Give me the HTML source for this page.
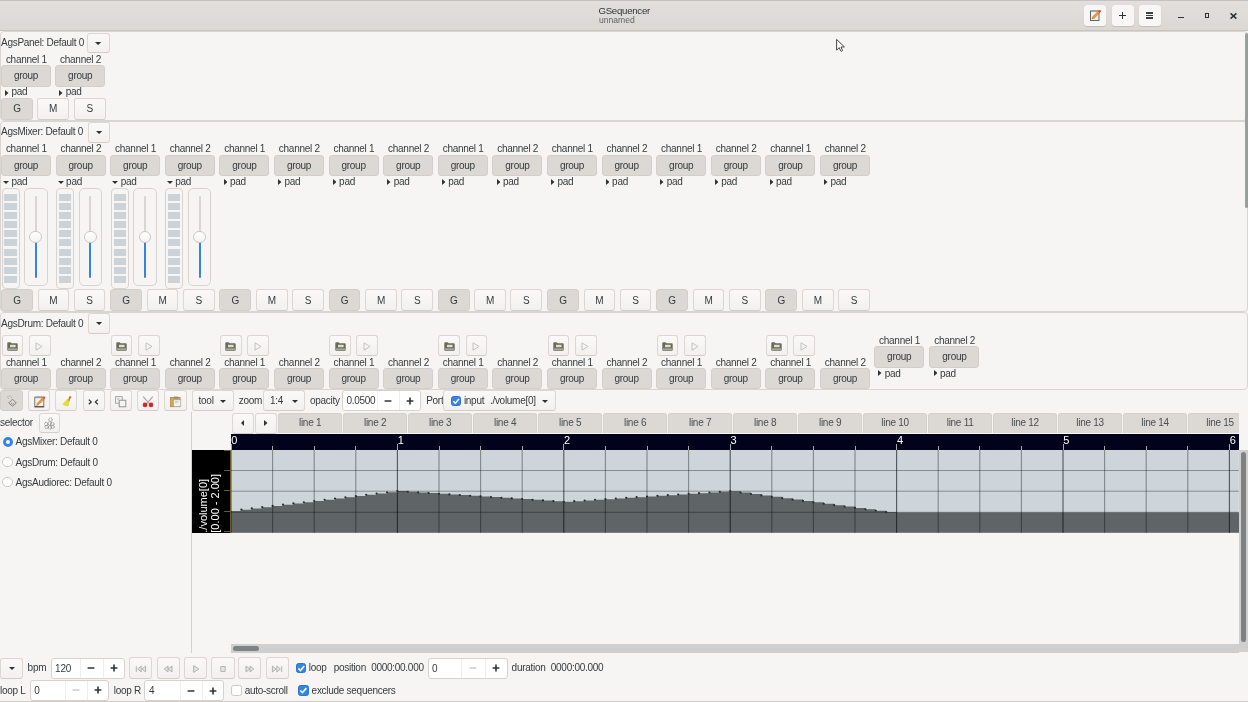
<!DOCTYPE html>
<html><head><meta charset="utf-8"><style>
html,body{margin:0;padding:0;}
body{width:1248px;height:702px;overflow:hidden;position:relative;background:#f6f5f4;font-family:"Liberation Sans",sans-serif;font-size:10px;color:#363b3d;letter-spacing:-0.28px;}
</style></head><body>
<div style="position:absolute;left:0;top:0;width:1248px;height:702px;overflow:hidden;will-change:transform;"><div style="position:absolute;left:0.00px;top:0.00px;width:1248.00px;height:31.00px;background:linear-gradient(#e2dfdc,#dbd8d4);border-top:1px solid #c3c3c2;border-bottom:1px solid #cac4bf;box-sizing:border-box;"></div><div style="position:absolute;left:524.20px;width:200px;text-align:center;top:5.42px;font-size:9.7px;line-height:11.15px;color:#2e3436;white-space:nowrap;">GSequencer</div><div style="position:absolute;left:598.90px;top:15.82px;font-size:8.6px;line-height:9.89px;color:#5e6466;white-space:nowrap;letter-spacing:0;">unnamed</div><div style="position:absolute;left:1084.00px;top:5.10px;width:22.20px;height:20.70px;background:#f8f7f6;border-radius:3px;box-shadow:0 0.5px 1px rgba(0,0,0,0.12);"></div><div style="position:absolute;left:1111.60px;top:5.10px;width:22.00px;height:20.70px;background:#f8f7f6;border-radius:3px;box-shadow:0 0.5px 1px rgba(0,0,0,0.12);"></div><div style="position:absolute;left:1138.80px;top:5.10px;width:22.20px;height:20.70px;background:#f8f7f6;border-radius:3px;box-shadow:0 0.5px 1px rgba(0,0,0,0.12);"></div><div style="position:absolute;left:1119.00px;top:14.75px;width:7.40px;height:1.50px;background:#2e3436;"></div><div style="position:absolute;left:1121.95px;top:11.90px;width:1.50px;height:7.20px;background:#2e3436;"></div><div style="position:absolute;left:1146.30px;top:12.00px;width:7.10px;height:1.50px;background:#3b4042;"></div><div style="position:absolute;left:1146.30px;top:14.70px;width:7.10px;height:1.50px;background:#3b4042;"></div><div style="position:absolute;left:1146.30px;top:17.40px;width:7.10px;height:1.50px;background:#3b4042;"></div><div style="position:absolute;left:1178.00px;top:16.60px;width:6.00px;height:1.40px;background:#2e3436;"></div><div style="position:absolute;left:1205.00px;top:13.40px;width:4.40px;height:4.50px;border:1.3px solid #2e3436;box-sizing:border-box;"></div><svg style="position:absolute;left:1229.5px;top:12.5px" width="7" height="6" viewBox="0 0 7 6"><path d="M0.6 0.4 L6.4 5.6 M6.4 0.4 L0.6 5.6" stroke="#2e3436" stroke-width="1.6"/></svg><svg style="position:absolute;left:1089px;top:9px" width="13" height="13" viewBox="0 0 13 13"><rect x="1.5" y="2" width="8.5" height="9.5" fill="#f2f2f0" stroke="#555753" stroke-width="0.9"/><rect x="2.5" y="1" width="6" height="1.6" fill="#a0a09c"/><path d="M3 10 L3.8 7.6 L9.6 2 L11 3.4 L5.2 9.2 Z" fill="#f0a030" stroke="#b06010" stroke-width="0.5"/><circle cx="10.6" cy="2.2" r="1.3" fill="#ef4040"/></svg><div style="position:absolute;left:0.00px;top:31.00px;width:1248.00px;height:90.00px;border:1px solid #d9d5d1;border-radius:4px;box-sizing:border-box;"></div><div style="position:absolute;left:0.00px;top:121.00px;width:1248.00px;height:191.00px;border:1px solid #d9d5d1;border-radius:4px;box-sizing:border-box;"></div><div style="position:absolute;left:0.00px;top:312.00px;width:1248.00px;height:78.00px;border:1px solid #d9d5d1;border-radius:4px;box-sizing:border-box;"></div><div style="position:absolute;left:1.00px;top:36.55px;font-size:10px;line-height:11.50px;color:#363b3d;white-space:nowrap;">AgsPanel: Default 0</div><div style="position:absolute;left:87.00px;top:33.00px;width:23.00px;height:20.20px;background:linear-gradient(#faf9f8,#f3f1ef);border:1px solid #dcd7d2;border-bottom-color:#d3cdc8;border-radius:3px;box-sizing:border-box;"></div><svg style="position:absolute;left:95.40px;top:41.75px" width="6.20" height="3.10" viewBox="0 0 6.20 3.10"><path d="M0 0 L6.20 0 L3.10 3.10 Z" fill="#2e3436"/></svg><div style="position:absolute;left:-73.70px;width:200px;text-align:center;top:53.75px;font-size:10px;line-height:11.50px;color:#363b3d;white-space:nowrap;">channel 1</div><div style="position:absolute;left:1.00px;top:65.00px;width:50.00px;height:21.60px;background:#dcd8d4;border:1px solid #d3cec9;border-radius:3px;box-sizing:border-box;"></div><div style="position:absolute;left:-74.00px;width:200px;text-align:center;top:70.35px;font-size:10px;line-height:11.50px;color:#363b3d;white-space:nowrap;">group</div><svg style="position:absolute;left:5.16px;top:90.10px" width="3.48" height="6.00" viewBox="0 0 3.48 6.00"><path d="M0 0 L3.48 3.00 L0 6.00 Z" fill="#2e3436"/></svg><div style="position:absolute;left:11.50px;top:85.55px;font-size:10px;line-height:11.50px;color:#363b3d;white-space:nowrap;">pad</div><div style="position:absolute;left:-19.50px;width:200px;text-align:center;top:53.75px;font-size:10px;line-height:11.50px;color:#363b3d;white-space:nowrap;">channel 2</div><div style="position:absolute;left:55.20px;top:65.00px;width:50.00px;height:21.60px;background:#dcd8d4;border:1px solid #d3cec9;border-radius:3px;box-sizing:border-box;"></div><div style="position:absolute;left:-19.80px;width:200px;text-align:center;top:70.35px;font-size:10px;line-height:11.50px;color:#363b3d;white-space:nowrap;">group</div><svg style="position:absolute;left:59.36px;top:90.10px" width="3.48" height="6.00" viewBox="0 0 3.48 6.00"><path d="M0 0 L3.48 3.00 L0 6.00 Z" fill="#2e3436"/></svg><div style="position:absolute;left:65.70px;top:85.55px;font-size:10px;line-height:11.50px;color:#363b3d;white-space:nowrap;">pad</div><div style="position:absolute;left:1.00px;top:98.00px;width:32.00px;height:21.60px;background:#dcd8d4;border:1px solid #d3cec9;border-radius:3px;box-sizing:border-box;"></div><div style="position:absolute;left:-83.00px;width:200px;text-align:center;top:103.35px;font-size:10px;line-height:11.50px;color:#363b3d;white-space:nowrap;">G</div><div style="position:absolute;left:37.00px;top:98.00px;width:32.00px;height:21.60px;background:linear-gradient(#faf9f8,#f3f1ef);border:1px solid #dcd7d2;border-bottom-color:#d3cdc8;border-radius:3px;box-sizing:border-box;"></div><div style="position:absolute;left:-47.00px;width:200px;text-align:center;top:103.35px;font-size:10px;line-height:11.50px;color:#363b3d;white-space:nowrap;">M</div><div style="position:absolute;left:74.00px;top:98.00px;width:31.60px;height:21.60px;background:linear-gradient(#faf9f8,#f3f1ef);border:1px solid #dcd7d2;border-bottom-color:#d3cdc8;border-radius:3px;box-sizing:border-box;"></div><div style="position:absolute;left:-10.20px;width:200px;text-align:center;top:103.35px;font-size:10px;line-height:11.50px;color:#363b3d;white-space:nowrap;">S</div><div style="position:absolute;left:1.00px;top:126.15px;font-size:10px;line-height:11.50px;color:#363b3d;white-space:nowrap;">AgsMixer: Default 0</div><div style="position:absolute;left:88.40px;top:122.40px;width:22.00px;height:20.60px;background:linear-gradient(#faf9f8,#f3f1ef);border:1px solid #dcd7d2;border-bottom-color:#d3cdc8;border-radius:3px;box-sizing:border-box;"></div><svg style="position:absolute;left:96.30px;top:131.35px" width="6.20" height="3.10" viewBox="0 0 6.20 3.10"><path d="M0 0 L6.20 0 L3.10 3.10 Z" fill="#2e3436"/></svg><div style="position:absolute;left:-73.70px;width:200px;text-align:center;top:143.45px;font-size:10px;line-height:11.50px;color:#363b3d;white-space:nowrap;">channel 1</div><div style="position:absolute;left:1.00px;top:155.00px;width:50.00px;height:21.40px;background:#dcd8d4;border:1px solid #d3cec9;border-radius:3px;box-sizing:border-box;"></div><div style="position:absolute;left:-74.00px;width:200px;text-align:center;top:160.25px;font-size:10px;line-height:11.50px;color:#363b3d;white-space:nowrap;">group</div><svg style="position:absolute;left:2.90px;top:181.00px" width="6.00" height="3.00" viewBox="0 0 6.00 3.00"><path d="M0 0 L6.00 0 L3.00 3.00 Z" fill="#2e3436"/></svg><div style="position:absolute;left:11.50px;top:176.05px;font-size:10px;line-height:11.50px;color:#363b3d;white-space:nowrap;">pad</div><div style="position:absolute;left:1.50px;top:188.00px;width:18.00px;height:100.60px;border:1px solid #d8d3ce;border-radius:4px;box-sizing:border-box;background:#f6f5f4;"></div><div style="position:absolute;left:4.30px;top:193.90px;width:12.40px;height:7.00px;background:#cbd2d8;"></div><div style="position:absolute;left:4.30px;top:203.00px;width:12.40px;height:7.00px;background:#cbd2d8;"></div><div style="position:absolute;left:4.30px;top:212.10px;width:12.40px;height:7.00px;background:#cbd2d8;"></div><div style="position:absolute;left:4.30px;top:221.20px;width:12.40px;height:7.00px;background:#cbd2d8;"></div><div style="position:absolute;left:4.30px;top:230.30px;width:12.40px;height:7.00px;background:#cbd2d8;"></div><div style="position:absolute;left:4.30px;top:239.40px;width:12.40px;height:7.00px;background:#cbd2d8;"></div><div style="position:absolute;left:4.30px;top:248.50px;width:12.40px;height:7.00px;background:#cbd2d8;"></div><div style="position:absolute;left:4.30px;top:257.60px;width:12.40px;height:7.00px;background:#cbd2d8;"></div><div style="position:absolute;left:4.30px;top:266.70px;width:12.40px;height:7.00px;background:#cbd2d8;"></div><div style="position:absolute;left:4.30px;top:275.80px;width:12.40px;height:7.00px;background:#cbd2d8;"></div><div style="position:absolute;left:24.00px;top:188.00px;width:23.50px;height:98.30px;border:1px solid #d8d3ce;border-radius:5px;box-sizing:border-box;background:#f6f5f4;"></div><div style="position:absolute;left:34.70px;top:196.30px;width:2.00px;height:40.70px;background:#d9d5d1;border-radius:1px;"></div><div style="position:absolute;left:34.70px;top:237.00px;width:2.00px;height:41.20px;background:#3584e4;border-radius:1px;"></div><div style="position:absolute;left:29.30px;top:230.60px;width:12.80px;height:12.80px;background:linear-gradient(#ffffff,#f4f3f1);border:1px solid #cdc7c2;border-radius:50%;box-sizing:border-box;"></div><div style="position:absolute;left:-19.10px;width:200px;text-align:center;top:143.45px;font-size:10px;line-height:11.50px;color:#363b3d;white-space:nowrap;">channel 2</div><div style="position:absolute;left:55.60px;top:155.00px;width:50.00px;height:21.40px;background:#dcd8d4;border:1px solid #d3cec9;border-radius:3px;box-sizing:border-box;"></div><div style="position:absolute;left:-19.40px;width:200px;text-align:center;top:160.25px;font-size:10px;line-height:11.50px;color:#363b3d;white-space:nowrap;">group</div><svg style="position:absolute;left:57.50px;top:181.00px" width="6.00" height="3.00" viewBox="0 0 6.00 3.00"><path d="M0 0 L6.00 0 L3.00 3.00 Z" fill="#2e3436"/></svg><div style="position:absolute;left:66.10px;top:176.05px;font-size:10px;line-height:11.50px;color:#363b3d;white-space:nowrap;">pad</div><div style="position:absolute;left:56.10px;top:188.00px;width:18.00px;height:100.60px;border:1px solid #d8d3ce;border-radius:4px;box-sizing:border-box;background:#f6f5f4;"></div><div style="position:absolute;left:58.90px;top:193.90px;width:12.40px;height:7.00px;background:#cbd2d8;"></div><div style="position:absolute;left:58.90px;top:203.00px;width:12.40px;height:7.00px;background:#cbd2d8;"></div><div style="position:absolute;left:58.90px;top:212.10px;width:12.40px;height:7.00px;background:#cbd2d8;"></div><div style="position:absolute;left:58.90px;top:221.20px;width:12.40px;height:7.00px;background:#cbd2d8;"></div><div style="position:absolute;left:58.90px;top:230.30px;width:12.40px;height:7.00px;background:#cbd2d8;"></div><div style="position:absolute;left:58.90px;top:239.40px;width:12.40px;height:7.00px;background:#cbd2d8;"></div><div style="position:absolute;left:58.90px;top:248.50px;width:12.40px;height:7.00px;background:#cbd2d8;"></div><div style="position:absolute;left:58.90px;top:257.60px;width:12.40px;height:7.00px;background:#cbd2d8;"></div><div style="position:absolute;left:58.90px;top:266.70px;width:12.40px;height:7.00px;background:#cbd2d8;"></div><div style="position:absolute;left:58.90px;top:275.80px;width:12.40px;height:7.00px;background:#cbd2d8;"></div><div style="position:absolute;left:78.60px;top:188.00px;width:23.50px;height:98.30px;border:1px solid #d8d3ce;border-radius:5px;box-sizing:border-box;background:#f6f5f4;"></div><div style="position:absolute;left:89.30px;top:196.30px;width:2.00px;height:40.70px;background:#d9d5d1;border-radius:1px;"></div><div style="position:absolute;left:89.30px;top:237.00px;width:2.00px;height:41.20px;background:#3584e4;border-radius:1px;"></div><div style="position:absolute;left:83.90px;top:230.60px;width:12.80px;height:12.80px;background:linear-gradient(#ffffff,#f4f3f1);border:1px solid #cdc7c2;border-radius:50%;box-sizing:border-box;"></div><div style="position:absolute;left:35.50px;width:200px;text-align:center;top:143.45px;font-size:10px;line-height:11.50px;color:#363b3d;white-space:nowrap;">channel 1</div><div style="position:absolute;left:110.20px;top:155.00px;width:50.00px;height:21.40px;background:#dcd8d4;border:1px solid #d3cec9;border-radius:3px;box-sizing:border-box;"></div><div style="position:absolute;left:35.20px;width:200px;text-align:center;top:160.25px;font-size:10px;line-height:11.50px;color:#363b3d;white-space:nowrap;">group</div><svg style="position:absolute;left:112.10px;top:181.00px" width="6.00" height="3.00" viewBox="0 0 6.00 3.00"><path d="M0 0 L6.00 0 L3.00 3.00 Z" fill="#2e3436"/></svg><div style="position:absolute;left:120.70px;top:176.05px;font-size:10px;line-height:11.50px;color:#363b3d;white-space:nowrap;">pad</div><div style="position:absolute;left:110.70px;top:188.00px;width:18.00px;height:100.60px;border:1px solid #d8d3ce;border-radius:4px;box-sizing:border-box;background:#f6f5f4;"></div><div style="position:absolute;left:113.50px;top:193.90px;width:12.40px;height:7.00px;background:#cbd2d8;"></div><div style="position:absolute;left:113.50px;top:203.00px;width:12.40px;height:7.00px;background:#cbd2d8;"></div><div style="position:absolute;left:113.50px;top:212.10px;width:12.40px;height:7.00px;background:#cbd2d8;"></div><div style="position:absolute;left:113.50px;top:221.20px;width:12.40px;height:7.00px;background:#cbd2d8;"></div><div style="position:absolute;left:113.50px;top:230.30px;width:12.40px;height:7.00px;background:#cbd2d8;"></div><div style="position:absolute;left:113.50px;top:239.40px;width:12.40px;height:7.00px;background:#cbd2d8;"></div><div style="position:absolute;left:113.50px;top:248.50px;width:12.40px;height:7.00px;background:#cbd2d8;"></div><div style="position:absolute;left:113.50px;top:257.60px;width:12.40px;height:7.00px;background:#cbd2d8;"></div><div style="position:absolute;left:113.50px;top:266.70px;width:12.40px;height:7.00px;background:#cbd2d8;"></div><div style="position:absolute;left:113.50px;top:275.80px;width:12.40px;height:7.00px;background:#cbd2d8;"></div><div style="position:absolute;left:133.20px;top:188.00px;width:23.50px;height:98.30px;border:1px solid #d8d3ce;border-radius:5px;box-sizing:border-box;background:#f6f5f4;"></div><div style="position:absolute;left:143.90px;top:196.30px;width:2.00px;height:40.70px;background:#d9d5d1;border-radius:1px;"></div><div style="position:absolute;left:143.90px;top:237.00px;width:2.00px;height:41.20px;background:#3584e4;border-radius:1px;"></div><div style="position:absolute;left:138.50px;top:230.60px;width:12.80px;height:12.80px;background:linear-gradient(#ffffff,#f4f3f1);border:1px solid #cdc7c2;border-radius:50%;box-sizing:border-box;"></div><div style="position:absolute;left:90.10px;width:200px;text-align:center;top:143.45px;font-size:10px;line-height:11.50px;color:#363b3d;white-space:nowrap;">channel 2</div><div style="position:absolute;left:164.80px;top:155.00px;width:50.00px;height:21.40px;background:#dcd8d4;border:1px solid #d3cec9;border-radius:3px;box-sizing:border-box;"></div><div style="position:absolute;left:89.80px;width:200px;text-align:center;top:160.25px;font-size:10px;line-height:11.50px;color:#363b3d;white-space:nowrap;">group</div><svg style="position:absolute;left:166.70px;top:181.00px" width="6.00" height="3.00" viewBox="0 0 6.00 3.00"><path d="M0 0 L6.00 0 L3.00 3.00 Z" fill="#2e3436"/></svg><div style="position:absolute;left:175.30px;top:176.05px;font-size:10px;line-height:11.50px;color:#363b3d;white-space:nowrap;">pad</div><div style="position:absolute;left:165.30px;top:188.00px;width:18.00px;height:100.60px;border:1px solid #d8d3ce;border-radius:4px;box-sizing:border-box;background:#f6f5f4;"></div><div style="position:absolute;left:168.10px;top:193.90px;width:12.40px;height:7.00px;background:#cbd2d8;"></div><div style="position:absolute;left:168.10px;top:203.00px;width:12.40px;height:7.00px;background:#cbd2d8;"></div><div style="position:absolute;left:168.10px;top:212.10px;width:12.40px;height:7.00px;background:#cbd2d8;"></div><div style="position:absolute;left:168.10px;top:221.20px;width:12.40px;height:7.00px;background:#cbd2d8;"></div><div style="position:absolute;left:168.10px;top:230.30px;width:12.40px;height:7.00px;background:#cbd2d8;"></div><div style="position:absolute;left:168.10px;top:239.40px;width:12.40px;height:7.00px;background:#cbd2d8;"></div><div style="position:absolute;left:168.10px;top:248.50px;width:12.40px;height:7.00px;background:#cbd2d8;"></div><div style="position:absolute;left:168.10px;top:257.60px;width:12.40px;height:7.00px;background:#cbd2d8;"></div><div style="position:absolute;left:168.10px;top:266.70px;width:12.40px;height:7.00px;background:#cbd2d8;"></div><div style="position:absolute;left:168.10px;top:275.80px;width:12.40px;height:7.00px;background:#cbd2d8;"></div><div style="position:absolute;left:187.80px;top:188.00px;width:23.50px;height:98.30px;border:1px solid #d8d3ce;border-radius:5px;box-sizing:border-box;background:#f6f5f4;"></div><div style="position:absolute;left:198.50px;top:196.30px;width:2.00px;height:40.70px;background:#d9d5d1;border-radius:1px;"></div><div style="position:absolute;left:198.50px;top:237.00px;width:2.00px;height:41.20px;background:#3584e4;border-radius:1px;"></div><div style="position:absolute;left:193.10px;top:230.60px;width:12.80px;height:12.80px;background:linear-gradient(#ffffff,#f4f3f1);border:1px solid #cdc7c2;border-radius:50%;box-sizing:border-box;"></div><div style="position:absolute;left:144.70px;width:200px;text-align:center;top:143.45px;font-size:10px;line-height:11.50px;color:#363b3d;white-space:nowrap;">channel 1</div><div style="position:absolute;left:219.40px;top:155.00px;width:50.00px;height:21.40px;background:#dcd8d4;border:1px solid #d3cec9;border-radius:3px;box-sizing:border-box;"></div><div style="position:absolute;left:144.40px;width:200px;text-align:center;top:160.25px;font-size:10px;line-height:11.50px;color:#363b3d;white-space:nowrap;">group</div><svg style="position:absolute;left:223.56px;top:179.40px" width="3.48" height="6.00" viewBox="0 0 3.48 6.00"><path d="M0 0 L3.48 3.00 L0 6.00 Z" fill="#2e3436"/></svg><div style="position:absolute;left:229.90px;top:176.05px;font-size:10px;line-height:11.50px;color:#363b3d;white-space:nowrap;">pad</div><div style="position:absolute;left:199.30px;width:200px;text-align:center;top:143.45px;font-size:10px;line-height:11.50px;color:#363b3d;white-space:nowrap;">channel 2</div><div style="position:absolute;left:274.00px;top:155.00px;width:50.00px;height:21.40px;background:#dcd8d4;border:1px solid #d3cec9;border-radius:3px;box-sizing:border-box;"></div><div style="position:absolute;left:199.00px;width:200px;text-align:center;top:160.25px;font-size:10px;line-height:11.50px;color:#363b3d;white-space:nowrap;">group</div><svg style="position:absolute;left:278.16px;top:179.40px" width="3.48" height="6.00" viewBox="0 0 3.48 6.00"><path d="M0 0 L3.48 3.00 L0 6.00 Z" fill="#2e3436"/></svg><div style="position:absolute;left:284.50px;top:176.05px;font-size:10px;line-height:11.50px;color:#363b3d;white-space:nowrap;">pad</div><div style="position:absolute;left:253.90px;width:200px;text-align:center;top:143.45px;font-size:10px;line-height:11.50px;color:#363b3d;white-space:nowrap;">channel 1</div><div style="position:absolute;left:328.60px;top:155.00px;width:50.00px;height:21.40px;background:#dcd8d4;border:1px solid #d3cec9;border-radius:3px;box-sizing:border-box;"></div><div style="position:absolute;left:253.60px;width:200px;text-align:center;top:160.25px;font-size:10px;line-height:11.50px;color:#363b3d;white-space:nowrap;">group</div><svg style="position:absolute;left:332.76px;top:179.40px" width="3.48" height="6.00" viewBox="0 0 3.48 6.00"><path d="M0 0 L3.48 3.00 L0 6.00 Z" fill="#2e3436"/></svg><div style="position:absolute;left:339.10px;top:176.05px;font-size:10px;line-height:11.50px;color:#363b3d;white-space:nowrap;">pad</div><div style="position:absolute;left:308.50px;width:200px;text-align:center;top:143.45px;font-size:10px;line-height:11.50px;color:#363b3d;white-space:nowrap;">channel 2</div><div style="position:absolute;left:383.20px;top:155.00px;width:50.00px;height:21.40px;background:#dcd8d4;border:1px solid #d3cec9;border-radius:3px;box-sizing:border-box;"></div><div style="position:absolute;left:308.20px;width:200px;text-align:center;top:160.25px;font-size:10px;line-height:11.50px;color:#363b3d;white-space:nowrap;">group</div><svg style="position:absolute;left:387.36px;top:179.40px" width="3.48" height="6.00" viewBox="0 0 3.48 6.00"><path d="M0 0 L3.48 3.00 L0 6.00 Z" fill="#2e3436"/></svg><div style="position:absolute;left:393.70px;top:176.05px;font-size:10px;line-height:11.50px;color:#363b3d;white-space:nowrap;">pad</div><div style="position:absolute;left:363.10px;width:200px;text-align:center;top:143.45px;font-size:10px;line-height:11.50px;color:#363b3d;white-space:nowrap;">channel 1</div><div style="position:absolute;left:437.80px;top:155.00px;width:50.00px;height:21.40px;background:#dcd8d4;border:1px solid #d3cec9;border-radius:3px;box-sizing:border-box;"></div><div style="position:absolute;left:362.80px;width:200px;text-align:center;top:160.25px;font-size:10px;line-height:11.50px;color:#363b3d;white-space:nowrap;">group</div><svg style="position:absolute;left:441.96px;top:179.40px" width="3.48" height="6.00" viewBox="0 0 3.48 6.00"><path d="M0 0 L3.48 3.00 L0 6.00 Z" fill="#2e3436"/></svg><div style="position:absolute;left:448.30px;top:176.05px;font-size:10px;line-height:11.50px;color:#363b3d;white-space:nowrap;">pad</div><div style="position:absolute;left:417.70px;width:200px;text-align:center;top:143.45px;font-size:10px;line-height:11.50px;color:#363b3d;white-space:nowrap;">channel 2</div><div style="position:absolute;left:492.40px;top:155.00px;width:50.00px;height:21.40px;background:#dcd8d4;border:1px solid #d3cec9;border-radius:3px;box-sizing:border-box;"></div><div style="position:absolute;left:417.40px;width:200px;text-align:center;top:160.25px;font-size:10px;line-height:11.50px;color:#363b3d;white-space:nowrap;">group</div><svg style="position:absolute;left:496.56px;top:179.40px" width="3.48" height="6.00" viewBox="0 0 3.48 6.00"><path d="M0 0 L3.48 3.00 L0 6.00 Z" fill="#2e3436"/></svg><div style="position:absolute;left:502.90px;top:176.05px;font-size:10px;line-height:11.50px;color:#363b3d;white-space:nowrap;">pad</div><div style="position:absolute;left:472.30px;width:200px;text-align:center;top:143.45px;font-size:10px;line-height:11.50px;color:#363b3d;white-space:nowrap;">channel 1</div><div style="position:absolute;left:547.00px;top:155.00px;width:50.00px;height:21.40px;background:#dcd8d4;border:1px solid #d3cec9;border-radius:3px;box-sizing:border-box;"></div><div style="position:absolute;left:472.00px;width:200px;text-align:center;top:160.25px;font-size:10px;line-height:11.50px;color:#363b3d;white-space:nowrap;">group</div><svg style="position:absolute;left:551.16px;top:179.40px" width="3.48" height="6.00" viewBox="0 0 3.48 6.00"><path d="M0 0 L3.48 3.00 L0 6.00 Z" fill="#2e3436"/></svg><div style="position:absolute;left:557.50px;top:176.05px;font-size:10px;line-height:11.50px;color:#363b3d;white-space:nowrap;">pad</div><div style="position:absolute;left:526.90px;width:200px;text-align:center;top:143.45px;font-size:10px;line-height:11.50px;color:#363b3d;white-space:nowrap;">channel 2</div><div style="position:absolute;left:601.60px;top:155.00px;width:50.00px;height:21.40px;background:#dcd8d4;border:1px solid #d3cec9;border-radius:3px;box-sizing:border-box;"></div><div style="position:absolute;left:526.60px;width:200px;text-align:center;top:160.25px;font-size:10px;line-height:11.50px;color:#363b3d;white-space:nowrap;">group</div><svg style="position:absolute;left:605.76px;top:179.40px" width="3.48" height="6.00" viewBox="0 0 3.48 6.00"><path d="M0 0 L3.48 3.00 L0 6.00 Z" fill="#2e3436"/></svg><div style="position:absolute;left:612.10px;top:176.05px;font-size:10px;line-height:11.50px;color:#363b3d;white-space:nowrap;">pad</div><div style="position:absolute;left:581.50px;width:200px;text-align:center;top:143.45px;font-size:10px;line-height:11.50px;color:#363b3d;white-space:nowrap;">channel 1</div><div style="position:absolute;left:656.20px;top:155.00px;width:50.00px;height:21.40px;background:#dcd8d4;border:1px solid #d3cec9;border-radius:3px;box-sizing:border-box;"></div><div style="position:absolute;left:581.20px;width:200px;text-align:center;top:160.25px;font-size:10px;line-height:11.50px;color:#363b3d;white-space:nowrap;">group</div><svg style="position:absolute;left:660.36px;top:179.40px" width="3.48" height="6.00" viewBox="0 0 3.48 6.00"><path d="M0 0 L3.48 3.00 L0 6.00 Z" fill="#2e3436"/></svg><div style="position:absolute;left:666.70px;top:176.05px;font-size:10px;line-height:11.50px;color:#363b3d;white-space:nowrap;">pad</div><div style="position:absolute;left:636.10px;width:200px;text-align:center;top:143.45px;font-size:10px;line-height:11.50px;color:#363b3d;white-space:nowrap;">channel 2</div><div style="position:absolute;left:710.80px;top:155.00px;width:50.00px;height:21.40px;background:#dcd8d4;border:1px solid #d3cec9;border-radius:3px;box-sizing:border-box;"></div><div style="position:absolute;left:635.80px;width:200px;text-align:center;top:160.25px;font-size:10px;line-height:11.50px;color:#363b3d;white-space:nowrap;">group</div><svg style="position:absolute;left:714.96px;top:179.40px" width="3.48" height="6.00" viewBox="0 0 3.48 6.00"><path d="M0 0 L3.48 3.00 L0 6.00 Z" fill="#2e3436"/></svg><div style="position:absolute;left:721.30px;top:176.05px;font-size:10px;line-height:11.50px;color:#363b3d;white-space:nowrap;">pad</div><div style="position:absolute;left:690.70px;width:200px;text-align:center;top:143.45px;font-size:10px;line-height:11.50px;color:#363b3d;white-space:nowrap;">channel 1</div><div style="position:absolute;left:765.40px;top:155.00px;width:50.00px;height:21.40px;background:#dcd8d4;border:1px solid #d3cec9;border-radius:3px;box-sizing:border-box;"></div><div style="position:absolute;left:690.40px;width:200px;text-align:center;top:160.25px;font-size:10px;line-height:11.50px;color:#363b3d;white-space:nowrap;">group</div><svg style="position:absolute;left:769.56px;top:179.40px" width="3.48" height="6.00" viewBox="0 0 3.48 6.00"><path d="M0 0 L3.48 3.00 L0 6.00 Z" fill="#2e3436"/></svg><div style="position:absolute;left:775.90px;top:176.05px;font-size:10px;line-height:11.50px;color:#363b3d;white-space:nowrap;">pad</div><div style="position:absolute;left:745.30px;width:200px;text-align:center;top:143.45px;font-size:10px;line-height:11.50px;color:#363b3d;white-space:nowrap;">channel 2</div><div style="position:absolute;left:820.00px;top:155.00px;width:50.00px;height:21.40px;background:#dcd8d4;border:1px solid #d3cec9;border-radius:3px;box-sizing:border-box;"></div><div style="position:absolute;left:745.00px;width:200px;text-align:center;top:160.25px;font-size:10px;line-height:11.50px;color:#363b3d;white-space:nowrap;">group</div><svg style="position:absolute;left:824.16px;top:179.40px" width="3.48" height="6.00" viewBox="0 0 3.48 6.00"><path d="M0 0 L3.48 3.00 L0 6.00 Z" fill="#2e3436"/></svg><div style="position:absolute;left:830.50px;top:176.05px;font-size:10px;line-height:11.50px;color:#363b3d;white-space:nowrap;">pad</div><div style="position:absolute;left:1.00px;top:289.40px;width:31.80px;height:21.60px;background:#dcd8d4;border:1px solid #d3cec9;border-radius:3px;box-sizing:border-box;"></div><div style="position:absolute;left:-83.10px;width:200px;text-align:center;top:294.75px;font-size:10px;line-height:11.50px;color:#363b3d;white-space:nowrap;">G</div><div style="position:absolute;left:37.50px;top:289.40px;width:31.70px;height:21.60px;background:linear-gradient(#faf9f8,#f3f1ef);border:1px solid #dcd7d2;border-bottom-color:#d3cdc8;border-radius:3px;box-sizing:border-box;"></div><div style="position:absolute;left:-46.65px;width:200px;text-align:center;top:294.75px;font-size:10px;line-height:11.50px;color:#363b3d;white-space:nowrap;">M</div><div style="position:absolute;left:73.60px;top:289.40px;width:31.80px;height:21.60px;background:linear-gradient(#faf9f8,#f3f1ef);border:1px solid #dcd7d2;border-bottom-color:#d3cdc8;border-radius:3px;box-sizing:border-box;"></div><div style="position:absolute;left:-10.50px;width:200px;text-align:center;top:294.75px;font-size:10px;line-height:11.50px;color:#363b3d;white-space:nowrap;">S</div><div style="position:absolute;left:110.20px;top:289.40px;width:31.80px;height:21.60px;background:#dcd8d4;border:1px solid #d3cec9;border-radius:3px;box-sizing:border-box;"></div><div style="position:absolute;left:26.10px;width:200px;text-align:center;top:294.75px;font-size:10px;line-height:11.50px;color:#363b3d;white-space:nowrap;">G</div><div style="position:absolute;left:146.70px;top:289.40px;width:31.70px;height:21.60px;background:linear-gradient(#faf9f8,#f3f1ef);border:1px solid #dcd7d2;border-bottom-color:#d3cdc8;border-radius:3px;box-sizing:border-box;"></div><div style="position:absolute;left:62.55px;width:200px;text-align:center;top:294.75px;font-size:10px;line-height:11.50px;color:#363b3d;white-space:nowrap;">M</div><div style="position:absolute;left:182.80px;top:289.40px;width:31.80px;height:21.60px;background:linear-gradient(#faf9f8,#f3f1ef);border:1px solid #dcd7d2;border-bottom-color:#d3cdc8;border-radius:3px;box-sizing:border-box;"></div><div style="position:absolute;left:98.70px;width:200px;text-align:center;top:294.75px;font-size:10px;line-height:11.50px;color:#363b3d;white-space:nowrap;">S</div><div style="position:absolute;left:219.40px;top:289.40px;width:31.80px;height:21.60px;background:#dcd8d4;border:1px solid #d3cec9;border-radius:3px;box-sizing:border-box;"></div><div style="position:absolute;left:135.30px;width:200px;text-align:center;top:294.75px;font-size:10px;line-height:11.50px;color:#363b3d;white-space:nowrap;">G</div><div style="position:absolute;left:255.90px;top:289.40px;width:31.70px;height:21.60px;background:linear-gradient(#faf9f8,#f3f1ef);border:1px solid #dcd7d2;border-bottom-color:#d3cdc8;border-radius:3px;box-sizing:border-box;"></div><div style="position:absolute;left:171.75px;width:200px;text-align:center;top:294.75px;font-size:10px;line-height:11.50px;color:#363b3d;white-space:nowrap;">M</div><div style="position:absolute;left:292.00px;top:289.40px;width:31.80px;height:21.60px;background:linear-gradient(#faf9f8,#f3f1ef);border:1px solid #dcd7d2;border-bottom-color:#d3cdc8;border-radius:3px;box-sizing:border-box;"></div><div style="position:absolute;left:207.90px;width:200px;text-align:center;top:294.75px;font-size:10px;line-height:11.50px;color:#363b3d;white-space:nowrap;">S</div><div style="position:absolute;left:328.60px;top:289.40px;width:31.80px;height:21.60px;background:#dcd8d4;border:1px solid #d3cec9;border-radius:3px;box-sizing:border-box;"></div><div style="position:absolute;left:244.50px;width:200px;text-align:center;top:294.75px;font-size:10px;line-height:11.50px;color:#363b3d;white-space:nowrap;">G</div><div style="position:absolute;left:365.10px;top:289.40px;width:31.70px;height:21.60px;background:linear-gradient(#faf9f8,#f3f1ef);border:1px solid #dcd7d2;border-bottom-color:#d3cdc8;border-radius:3px;box-sizing:border-box;"></div><div style="position:absolute;left:280.95px;width:200px;text-align:center;top:294.75px;font-size:10px;line-height:11.50px;color:#363b3d;white-space:nowrap;">M</div><div style="position:absolute;left:401.20px;top:289.40px;width:31.80px;height:21.60px;background:linear-gradient(#faf9f8,#f3f1ef);border:1px solid #dcd7d2;border-bottom-color:#d3cdc8;border-radius:3px;box-sizing:border-box;"></div><div style="position:absolute;left:317.10px;width:200px;text-align:center;top:294.75px;font-size:10px;line-height:11.50px;color:#363b3d;white-space:nowrap;">S</div><div style="position:absolute;left:437.80px;top:289.40px;width:31.80px;height:21.60px;background:#dcd8d4;border:1px solid #d3cec9;border-radius:3px;box-sizing:border-box;"></div><div style="position:absolute;left:353.70px;width:200px;text-align:center;top:294.75px;font-size:10px;line-height:11.50px;color:#363b3d;white-space:nowrap;">G</div><div style="position:absolute;left:474.30px;top:289.40px;width:31.70px;height:21.60px;background:linear-gradient(#faf9f8,#f3f1ef);border:1px solid #dcd7d2;border-bottom-color:#d3cdc8;border-radius:3px;box-sizing:border-box;"></div><div style="position:absolute;left:390.15px;width:200px;text-align:center;top:294.75px;font-size:10px;line-height:11.50px;color:#363b3d;white-space:nowrap;">M</div><div style="position:absolute;left:510.40px;top:289.40px;width:31.80px;height:21.60px;background:linear-gradient(#faf9f8,#f3f1ef);border:1px solid #dcd7d2;border-bottom-color:#d3cdc8;border-radius:3px;box-sizing:border-box;"></div><div style="position:absolute;left:426.30px;width:200px;text-align:center;top:294.75px;font-size:10px;line-height:11.50px;color:#363b3d;white-space:nowrap;">S</div><div style="position:absolute;left:547.00px;top:289.40px;width:31.80px;height:21.60px;background:#dcd8d4;border:1px solid #d3cec9;border-radius:3px;box-sizing:border-box;"></div><div style="position:absolute;left:462.90px;width:200px;text-align:center;top:294.75px;font-size:10px;line-height:11.50px;color:#363b3d;white-space:nowrap;">G</div><div style="position:absolute;left:583.50px;top:289.40px;width:31.70px;height:21.60px;background:linear-gradient(#faf9f8,#f3f1ef);border:1px solid #dcd7d2;border-bottom-color:#d3cdc8;border-radius:3px;box-sizing:border-box;"></div><div style="position:absolute;left:499.35px;width:200px;text-align:center;top:294.75px;font-size:10px;line-height:11.50px;color:#363b3d;white-space:nowrap;">M</div><div style="position:absolute;left:619.60px;top:289.40px;width:31.80px;height:21.60px;background:linear-gradient(#faf9f8,#f3f1ef);border:1px solid #dcd7d2;border-bottom-color:#d3cdc8;border-radius:3px;box-sizing:border-box;"></div><div style="position:absolute;left:535.50px;width:200px;text-align:center;top:294.75px;font-size:10px;line-height:11.50px;color:#363b3d;white-space:nowrap;">S</div><div style="position:absolute;left:656.20px;top:289.40px;width:31.80px;height:21.60px;background:#dcd8d4;border:1px solid #d3cec9;border-radius:3px;box-sizing:border-box;"></div><div style="position:absolute;left:572.10px;width:200px;text-align:center;top:294.75px;font-size:10px;line-height:11.50px;color:#363b3d;white-space:nowrap;">G</div><div style="position:absolute;left:692.70px;top:289.40px;width:31.70px;height:21.60px;background:linear-gradient(#faf9f8,#f3f1ef);border:1px solid #dcd7d2;border-bottom-color:#d3cdc8;border-radius:3px;box-sizing:border-box;"></div><div style="position:absolute;left:608.55px;width:200px;text-align:center;top:294.75px;font-size:10px;line-height:11.50px;color:#363b3d;white-space:nowrap;">M</div><div style="position:absolute;left:728.80px;top:289.40px;width:31.80px;height:21.60px;background:linear-gradient(#faf9f8,#f3f1ef);border:1px solid #dcd7d2;border-bottom-color:#d3cdc8;border-radius:3px;box-sizing:border-box;"></div><div style="position:absolute;left:644.70px;width:200px;text-align:center;top:294.75px;font-size:10px;line-height:11.50px;color:#363b3d;white-space:nowrap;">S</div><div style="position:absolute;left:765.40px;top:289.40px;width:31.80px;height:21.60px;background:#dcd8d4;border:1px solid #d3cec9;border-radius:3px;box-sizing:border-box;"></div><div style="position:absolute;left:681.30px;width:200px;text-align:center;top:294.75px;font-size:10px;line-height:11.50px;color:#363b3d;white-space:nowrap;">G</div><div style="position:absolute;left:801.90px;top:289.40px;width:31.70px;height:21.60px;background:linear-gradient(#faf9f8,#f3f1ef);border:1px solid #dcd7d2;border-bottom-color:#d3cdc8;border-radius:3px;box-sizing:border-box;"></div><div style="position:absolute;left:717.75px;width:200px;text-align:center;top:294.75px;font-size:10px;line-height:11.50px;color:#363b3d;white-space:nowrap;">M</div><div style="position:absolute;left:838.00px;top:289.40px;width:31.80px;height:21.60px;background:linear-gradient(#faf9f8,#f3f1ef);border:1px solid #dcd7d2;border-bottom-color:#d3cdc8;border-radius:3px;box-sizing:border-box;"></div><div style="position:absolute;left:753.90px;width:200px;text-align:center;top:294.75px;font-size:10px;line-height:11.50px;color:#363b3d;white-space:nowrap;">S</div><div style="position:absolute;left:1.00px;top:317.75px;font-size:10px;line-height:11.50px;color:#363b3d;white-space:nowrap;">AgsDrum: Default 0</div><div style="position:absolute;left:88.40px;top:313.40px;width:21.80px;height:20.80px;background:linear-gradient(#faf9f8,#f3f1ef);border:1px solid #dcd7d2;border-bottom-color:#d3cdc8;border-radius:3px;box-sizing:border-box;"></div><svg style="position:absolute;left:96.20px;top:322.45px" width="6.20" height="3.10" viewBox="0 0 6.20 3.10"><path d="M0 0 L6.20 0 L3.10 3.10 Z" fill="#2e3436"/></svg><div style="position:absolute;left:1.50px;top:335.40px;width:21.70px;height:20.80px;background:linear-gradient(#faf9f8,#f3f1ef);border:1px solid #dcd7d2;border-bottom-color:#d3cdc8;border-radius:3px;box-sizing:border-box;"></div><svg style="position:absolute;left:7.00px;top:342.00px" width="11" height="9" viewBox="0 0 11 9"><path d="M0.3 1.2 Q0.3 0.3 1.2 0.3 L3.6 0.3 L4.6 1.3 L9.8 1.3 Q10.7 1.3 10.7 2.2 L10.7 8 Q10.7 8.8 9.9 8.8 L1.1 8.8 Q0.3 8.8 0.3 8 Z" fill="#6a6c58"/><rect x="1" y="6.4" width="9" height="1.6" fill="#a9ab98"/><rect x="3" y="2.8" width="5.6" height="2.4" fill="#dcded2"/></svg><div style="position:absolute;left:28.70px;top:335.40px;width:21.90px;height:20.80px;background:linear-gradient(#faf9f8,#f3f1ef);border:1px solid #dcd7d2;border-bottom-color:#d3cdc8;border-radius:3px;box-sizing:border-box;"></div><svg style="position:absolute;left:35.40px;top:341.80px" width="8" height="9" viewBox="0 0 8 9"><path d="M1 0.8 L7 4.5 L1 8.2 Z" fill="none" stroke="#bdbdbb" stroke-width="0.9"/></svg><div style="position:absolute;left:110.70px;top:335.40px;width:21.70px;height:20.80px;background:linear-gradient(#faf9f8,#f3f1ef);border:1px solid #dcd7d2;border-bottom-color:#d3cdc8;border-radius:3px;box-sizing:border-box;"></div><svg style="position:absolute;left:116.20px;top:342.00px" width="11" height="9" viewBox="0 0 11 9"><path d="M0.3 1.2 Q0.3 0.3 1.2 0.3 L3.6 0.3 L4.6 1.3 L9.8 1.3 Q10.7 1.3 10.7 2.2 L10.7 8 Q10.7 8.8 9.9 8.8 L1.1 8.8 Q0.3 8.8 0.3 8 Z" fill="#6a6c58"/><rect x="1" y="6.4" width="9" height="1.6" fill="#a9ab98"/><rect x="3" y="2.8" width="5.6" height="2.4" fill="#dcded2"/></svg><div style="position:absolute;left:137.90px;top:335.40px;width:21.90px;height:20.80px;background:linear-gradient(#faf9f8,#f3f1ef);border:1px solid #dcd7d2;border-bottom-color:#d3cdc8;border-radius:3px;box-sizing:border-box;"></div><svg style="position:absolute;left:144.60px;top:341.80px" width="8" height="9" viewBox="0 0 8 9"><path d="M1 0.8 L7 4.5 L1 8.2 Z" fill="none" stroke="#bdbdbb" stroke-width="0.9"/></svg><div style="position:absolute;left:219.90px;top:335.40px;width:21.70px;height:20.80px;background:linear-gradient(#faf9f8,#f3f1ef);border:1px solid #dcd7d2;border-bottom-color:#d3cdc8;border-radius:3px;box-sizing:border-box;"></div><svg style="position:absolute;left:225.40px;top:342.00px" width="11" height="9" viewBox="0 0 11 9"><path d="M0.3 1.2 Q0.3 0.3 1.2 0.3 L3.6 0.3 L4.6 1.3 L9.8 1.3 Q10.7 1.3 10.7 2.2 L10.7 8 Q10.7 8.8 9.9 8.8 L1.1 8.8 Q0.3 8.8 0.3 8 Z" fill="#6a6c58"/><rect x="1" y="6.4" width="9" height="1.6" fill="#a9ab98"/><rect x="3" y="2.8" width="5.6" height="2.4" fill="#dcded2"/></svg><div style="position:absolute;left:247.10px;top:335.40px;width:21.90px;height:20.80px;background:linear-gradient(#faf9f8,#f3f1ef);border:1px solid #dcd7d2;border-bottom-color:#d3cdc8;border-radius:3px;box-sizing:border-box;"></div><svg style="position:absolute;left:253.80px;top:341.80px" width="8" height="9" viewBox="0 0 8 9"><path d="M1 0.8 L7 4.5 L1 8.2 Z" fill="none" stroke="#bdbdbb" stroke-width="0.9"/></svg><div style="position:absolute;left:329.10px;top:335.40px;width:21.70px;height:20.80px;background:linear-gradient(#faf9f8,#f3f1ef);border:1px solid #dcd7d2;border-bottom-color:#d3cdc8;border-radius:3px;box-sizing:border-box;"></div><svg style="position:absolute;left:334.60px;top:342.00px" width="11" height="9" viewBox="0 0 11 9"><path d="M0.3 1.2 Q0.3 0.3 1.2 0.3 L3.6 0.3 L4.6 1.3 L9.8 1.3 Q10.7 1.3 10.7 2.2 L10.7 8 Q10.7 8.8 9.9 8.8 L1.1 8.8 Q0.3 8.8 0.3 8 Z" fill="#6a6c58"/><rect x="1" y="6.4" width="9" height="1.6" fill="#a9ab98"/><rect x="3" y="2.8" width="5.6" height="2.4" fill="#dcded2"/></svg><div style="position:absolute;left:356.30px;top:335.40px;width:21.90px;height:20.80px;background:linear-gradient(#faf9f8,#f3f1ef);border:1px solid #dcd7d2;border-bottom-color:#d3cdc8;border-radius:3px;box-sizing:border-box;"></div><svg style="position:absolute;left:363.00px;top:341.80px" width="8" height="9" viewBox="0 0 8 9"><path d="M1 0.8 L7 4.5 L1 8.2 Z" fill="none" stroke="#bdbdbb" stroke-width="0.9"/></svg><div style="position:absolute;left:438.30px;top:335.40px;width:21.70px;height:20.80px;background:linear-gradient(#faf9f8,#f3f1ef);border:1px solid #dcd7d2;border-bottom-color:#d3cdc8;border-radius:3px;box-sizing:border-box;"></div><svg style="position:absolute;left:443.80px;top:342.00px" width="11" height="9" viewBox="0 0 11 9"><path d="M0.3 1.2 Q0.3 0.3 1.2 0.3 L3.6 0.3 L4.6 1.3 L9.8 1.3 Q10.7 1.3 10.7 2.2 L10.7 8 Q10.7 8.8 9.9 8.8 L1.1 8.8 Q0.3 8.8 0.3 8 Z" fill="#6a6c58"/><rect x="1" y="6.4" width="9" height="1.6" fill="#a9ab98"/><rect x="3" y="2.8" width="5.6" height="2.4" fill="#dcded2"/></svg><div style="position:absolute;left:465.50px;top:335.40px;width:21.90px;height:20.80px;background:linear-gradient(#faf9f8,#f3f1ef);border:1px solid #dcd7d2;border-bottom-color:#d3cdc8;border-radius:3px;box-sizing:border-box;"></div><svg style="position:absolute;left:472.20px;top:341.80px" width="8" height="9" viewBox="0 0 8 9"><path d="M1 0.8 L7 4.5 L1 8.2 Z" fill="none" stroke="#bdbdbb" stroke-width="0.9"/></svg><div style="position:absolute;left:547.50px;top:335.40px;width:21.70px;height:20.80px;background:linear-gradient(#faf9f8,#f3f1ef);border:1px solid #dcd7d2;border-bottom-color:#d3cdc8;border-radius:3px;box-sizing:border-box;"></div><svg style="position:absolute;left:553.00px;top:342.00px" width="11" height="9" viewBox="0 0 11 9"><path d="M0.3 1.2 Q0.3 0.3 1.2 0.3 L3.6 0.3 L4.6 1.3 L9.8 1.3 Q10.7 1.3 10.7 2.2 L10.7 8 Q10.7 8.8 9.9 8.8 L1.1 8.8 Q0.3 8.8 0.3 8 Z" fill="#6a6c58"/><rect x="1" y="6.4" width="9" height="1.6" fill="#a9ab98"/><rect x="3" y="2.8" width="5.6" height="2.4" fill="#dcded2"/></svg><div style="position:absolute;left:574.70px;top:335.40px;width:21.90px;height:20.80px;background:linear-gradient(#faf9f8,#f3f1ef);border:1px solid #dcd7d2;border-bottom-color:#d3cdc8;border-radius:3px;box-sizing:border-box;"></div><svg style="position:absolute;left:581.40px;top:341.80px" width="8" height="9" viewBox="0 0 8 9"><path d="M1 0.8 L7 4.5 L1 8.2 Z" fill="none" stroke="#bdbdbb" stroke-width="0.9"/></svg><div style="position:absolute;left:656.70px;top:335.40px;width:21.70px;height:20.80px;background:linear-gradient(#faf9f8,#f3f1ef);border:1px solid #dcd7d2;border-bottom-color:#d3cdc8;border-radius:3px;box-sizing:border-box;"></div><svg style="position:absolute;left:662.20px;top:342.00px" width="11" height="9" viewBox="0 0 11 9"><path d="M0.3 1.2 Q0.3 0.3 1.2 0.3 L3.6 0.3 L4.6 1.3 L9.8 1.3 Q10.7 1.3 10.7 2.2 L10.7 8 Q10.7 8.8 9.9 8.8 L1.1 8.8 Q0.3 8.8 0.3 8 Z" fill="#6a6c58"/><rect x="1" y="6.4" width="9" height="1.6" fill="#a9ab98"/><rect x="3" y="2.8" width="5.6" height="2.4" fill="#dcded2"/></svg><div style="position:absolute;left:683.90px;top:335.40px;width:21.90px;height:20.80px;background:linear-gradient(#faf9f8,#f3f1ef);border:1px solid #dcd7d2;border-bottom-color:#d3cdc8;border-radius:3px;box-sizing:border-box;"></div><svg style="position:absolute;left:690.60px;top:341.80px" width="8" height="9" viewBox="0 0 8 9"><path d="M1 0.8 L7 4.5 L1 8.2 Z" fill="none" stroke="#bdbdbb" stroke-width="0.9"/></svg><div style="position:absolute;left:765.90px;top:335.40px;width:21.70px;height:20.80px;background:linear-gradient(#faf9f8,#f3f1ef);border:1px solid #dcd7d2;border-bottom-color:#d3cdc8;border-radius:3px;box-sizing:border-box;"></div><svg style="position:absolute;left:771.40px;top:342.00px" width="11" height="9" viewBox="0 0 11 9"><path d="M0.3 1.2 Q0.3 0.3 1.2 0.3 L3.6 0.3 L4.6 1.3 L9.8 1.3 Q10.7 1.3 10.7 2.2 L10.7 8 Q10.7 8.8 9.9 8.8 L1.1 8.8 Q0.3 8.8 0.3 8 Z" fill="#6a6c58"/><rect x="1" y="6.4" width="9" height="1.6" fill="#a9ab98"/><rect x="3" y="2.8" width="5.6" height="2.4" fill="#dcded2"/></svg><div style="position:absolute;left:793.10px;top:335.40px;width:21.90px;height:20.80px;background:linear-gradient(#faf9f8,#f3f1ef);border:1px solid #dcd7d2;border-bottom-color:#d3cdc8;border-radius:3px;box-sizing:border-box;"></div><svg style="position:absolute;left:799.80px;top:341.80px" width="8" height="9" viewBox="0 0 8 9"><path d="M1 0.8 L7 4.5 L1 8.2 Z" fill="none" stroke="#bdbdbb" stroke-width="0.9"/></svg><div style="position:absolute;left:-73.70px;width:200px;text-align:center;top:356.75px;font-size:10px;line-height:11.50px;color:#363b3d;white-space:nowrap;">channel 1</div><div style="position:absolute;left:1.00px;top:368.40px;width:50.00px;height:20.90px;background:#dcd8d4;border:1px solid #d3cec9;border-radius:3px;box-sizing:border-box;"></div><div style="position:absolute;left:-74.00px;width:200px;text-align:center;top:373.40px;font-size:10px;line-height:11.50px;color:#363b3d;white-space:nowrap;">group</div><div style="position:absolute;left:-19.10px;width:200px;text-align:center;top:356.75px;font-size:10px;line-height:11.50px;color:#363b3d;white-space:nowrap;">channel 2</div><div style="position:absolute;left:55.60px;top:368.40px;width:50.00px;height:20.90px;background:#dcd8d4;border:1px solid #d3cec9;border-radius:3px;box-sizing:border-box;"></div><div style="position:absolute;left:-19.40px;width:200px;text-align:center;top:373.40px;font-size:10px;line-height:11.50px;color:#363b3d;white-space:nowrap;">group</div><div style="position:absolute;left:35.50px;width:200px;text-align:center;top:356.75px;font-size:10px;line-height:11.50px;color:#363b3d;white-space:nowrap;">channel 1</div><div style="position:absolute;left:110.20px;top:368.40px;width:50.00px;height:20.90px;background:#dcd8d4;border:1px solid #d3cec9;border-radius:3px;box-sizing:border-box;"></div><div style="position:absolute;left:35.20px;width:200px;text-align:center;top:373.40px;font-size:10px;line-height:11.50px;color:#363b3d;white-space:nowrap;">group</div><div style="position:absolute;left:90.10px;width:200px;text-align:center;top:356.75px;font-size:10px;line-height:11.50px;color:#363b3d;white-space:nowrap;">channel 2</div><div style="position:absolute;left:164.80px;top:368.40px;width:50.00px;height:20.90px;background:#dcd8d4;border:1px solid #d3cec9;border-radius:3px;box-sizing:border-box;"></div><div style="position:absolute;left:89.80px;width:200px;text-align:center;top:373.40px;font-size:10px;line-height:11.50px;color:#363b3d;white-space:nowrap;">group</div><div style="position:absolute;left:144.70px;width:200px;text-align:center;top:356.75px;font-size:10px;line-height:11.50px;color:#363b3d;white-space:nowrap;">channel 1</div><div style="position:absolute;left:219.40px;top:368.40px;width:50.00px;height:20.90px;background:#dcd8d4;border:1px solid #d3cec9;border-radius:3px;box-sizing:border-box;"></div><div style="position:absolute;left:144.40px;width:200px;text-align:center;top:373.40px;font-size:10px;line-height:11.50px;color:#363b3d;white-space:nowrap;">group</div><div style="position:absolute;left:199.30px;width:200px;text-align:center;top:356.75px;font-size:10px;line-height:11.50px;color:#363b3d;white-space:nowrap;">channel 2</div><div style="position:absolute;left:274.00px;top:368.40px;width:50.00px;height:20.90px;background:#dcd8d4;border:1px solid #d3cec9;border-radius:3px;box-sizing:border-box;"></div><div style="position:absolute;left:199.00px;width:200px;text-align:center;top:373.40px;font-size:10px;line-height:11.50px;color:#363b3d;white-space:nowrap;">group</div><div style="position:absolute;left:253.90px;width:200px;text-align:center;top:356.75px;font-size:10px;line-height:11.50px;color:#363b3d;white-space:nowrap;">channel 1</div><div style="position:absolute;left:328.60px;top:368.40px;width:50.00px;height:20.90px;background:#dcd8d4;border:1px solid #d3cec9;border-radius:3px;box-sizing:border-box;"></div><div style="position:absolute;left:253.60px;width:200px;text-align:center;top:373.40px;font-size:10px;line-height:11.50px;color:#363b3d;white-space:nowrap;">group</div><div style="position:absolute;left:308.50px;width:200px;text-align:center;top:356.75px;font-size:10px;line-height:11.50px;color:#363b3d;white-space:nowrap;">channel 2</div><div style="position:absolute;left:383.20px;top:368.40px;width:50.00px;height:20.90px;background:#dcd8d4;border:1px solid #d3cec9;border-radius:3px;box-sizing:border-box;"></div><div style="position:absolute;left:308.20px;width:200px;text-align:center;top:373.40px;font-size:10px;line-height:11.50px;color:#363b3d;white-space:nowrap;">group</div><div style="position:absolute;left:363.10px;width:200px;text-align:center;top:356.75px;font-size:10px;line-height:11.50px;color:#363b3d;white-space:nowrap;">channel 1</div><div style="position:absolute;left:437.80px;top:368.40px;width:50.00px;height:20.90px;background:#dcd8d4;border:1px solid #d3cec9;border-radius:3px;box-sizing:border-box;"></div><div style="position:absolute;left:362.80px;width:200px;text-align:center;top:373.40px;font-size:10px;line-height:11.50px;color:#363b3d;white-space:nowrap;">group</div><div style="position:absolute;left:417.70px;width:200px;text-align:center;top:356.75px;font-size:10px;line-height:11.50px;color:#363b3d;white-space:nowrap;">channel 2</div><div style="position:absolute;left:492.40px;top:368.40px;width:50.00px;height:20.90px;background:#dcd8d4;border:1px solid #d3cec9;border-radius:3px;box-sizing:border-box;"></div><div style="position:absolute;left:417.40px;width:200px;text-align:center;top:373.40px;font-size:10px;line-height:11.50px;color:#363b3d;white-space:nowrap;">group</div><div style="position:absolute;left:472.30px;width:200px;text-align:center;top:356.75px;font-size:10px;line-height:11.50px;color:#363b3d;white-space:nowrap;">channel 1</div><div style="position:absolute;left:547.00px;top:368.40px;width:50.00px;height:20.90px;background:#dcd8d4;border:1px solid #d3cec9;border-radius:3px;box-sizing:border-box;"></div><div style="position:absolute;left:472.00px;width:200px;text-align:center;top:373.40px;font-size:10px;line-height:11.50px;color:#363b3d;white-space:nowrap;">group</div><div style="position:absolute;left:526.90px;width:200px;text-align:center;top:356.75px;font-size:10px;line-height:11.50px;color:#363b3d;white-space:nowrap;">channel 2</div><div style="position:absolute;left:601.60px;top:368.40px;width:50.00px;height:20.90px;background:#dcd8d4;border:1px solid #d3cec9;border-radius:3px;box-sizing:border-box;"></div><div style="position:absolute;left:526.60px;width:200px;text-align:center;top:373.40px;font-size:10px;line-height:11.50px;color:#363b3d;white-space:nowrap;">group</div><div style="position:absolute;left:581.50px;width:200px;text-align:center;top:356.75px;font-size:10px;line-height:11.50px;color:#363b3d;white-space:nowrap;">channel 1</div><div style="position:absolute;left:656.20px;top:368.40px;width:50.00px;height:20.90px;background:#dcd8d4;border:1px solid #d3cec9;border-radius:3px;box-sizing:border-box;"></div><div style="position:absolute;left:581.20px;width:200px;text-align:center;top:373.40px;font-size:10px;line-height:11.50px;color:#363b3d;white-space:nowrap;">group</div><div style="position:absolute;left:636.10px;width:200px;text-align:center;top:356.75px;font-size:10px;line-height:11.50px;color:#363b3d;white-space:nowrap;">channel 2</div><div style="position:absolute;left:710.80px;top:368.40px;width:50.00px;height:20.90px;background:#dcd8d4;border:1px solid #d3cec9;border-radius:3px;box-sizing:border-box;"></div><div style="position:absolute;left:635.80px;width:200px;text-align:center;top:373.40px;font-size:10px;line-height:11.50px;color:#363b3d;white-space:nowrap;">group</div><div style="position:absolute;left:690.70px;width:200px;text-align:center;top:356.75px;font-size:10px;line-height:11.50px;color:#363b3d;white-space:nowrap;">channel 1</div><div style="position:absolute;left:765.40px;top:368.40px;width:50.00px;height:20.90px;background:#dcd8d4;border:1px solid #d3cec9;border-radius:3px;box-sizing:border-box;"></div><div style="position:absolute;left:690.40px;width:200px;text-align:center;top:373.40px;font-size:10px;line-height:11.50px;color:#363b3d;white-space:nowrap;">group</div><div style="position:absolute;left:745.30px;width:200px;text-align:center;top:356.75px;font-size:10px;line-height:11.50px;color:#363b3d;white-space:nowrap;">channel 2</div><div style="position:absolute;left:820.00px;top:368.40px;width:50.00px;height:20.90px;background:#dcd8d4;border:1px solid #d3cec9;border-radius:3px;box-sizing:border-box;"></div><div style="position:absolute;left:745.00px;width:200px;text-align:center;top:373.40px;font-size:10px;line-height:11.50px;color:#363b3d;white-space:nowrap;">group</div><div style="position:absolute;left:799.50px;width:200px;text-align:center;top:335.05px;font-size:10px;line-height:11.50px;color:#363b3d;white-space:nowrap;">channel 1</div><div style="position:absolute;left:874.20px;top:346.00px;width:50.00px;height:21.70px;background:#dcd8d4;border:1px solid #d3cec9;border-radius:3px;box-sizing:border-box;"></div><div style="position:absolute;left:799.20px;width:200px;text-align:center;top:351.40px;font-size:10px;line-height:11.50px;color:#363b3d;white-space:nowrap;">group</div><svg style="position:absolute;left:878.36px;top:370.20px" width="3.48" height="6.00" viewBox="0 0 3.48 6.00"><path d="M0 0 L3.48 3.00 L0 6.00 Z" fill="#2e3436"/></svg><div style="position:absolute;left:884.70px;top:367.55px;font-size:10px;line-height:11.50px;color:#363b3d;white-space:nowrap;">pad</div><div style="position:absolute;left:854.70px;width:200px;text-align:center;top:335.05px;font-size:10px;line-height:11.50px;color:#363b3d;white-space:nowrap;">channel 2</div><div style="position:absolute;left:929.40px;top:346.00px;width:50.00px;height:21.70px;background:#dcd8d4;border:1px solid #d3cec9;border-radius:3px;box-sizing:border-box;"></div><div style="position:absolute;left:854.40px;width:200px;text-align:center;top:351.40px;font-size:10px;line-height:11.50px;color:#363b3d;white-space:nowrap;">group</div><svg style="position:absolute;left:933.56px;top:370.20px" width="3.48" height="6.00" viewBox="0 0 3.48 6.00"><path d="M0 0 L3.48 3.00 L0 6.00 Z" fill="#2e3436"/></svg><div style="position:absolute;left:939.90px;top:367.55px;font-size:10px;line-height:11.50px;color:#363b3d;white-space:nowrap;">pad</div><div style="position:absolute;left:0.00px;top:390.40px;width:22.90px;height:21.00px;background:#dcd8d4;border:1px solid #d3cec9;border-radius:3px;box-sizing:border-box;"></div><div style="position:absolute;left:27.60px;top:390.40px;width:22.60px;height:21.00px;background:linear-gradient(#faf9f8,#f3f1ef);border:1px solid #dcd7d2;border-bottom-color:#d3cdc8;border-radius:3px;box-sizing:border-box;"></div><div style="position:absolute;left:55.00px;top:390.40px;width:22.40px;height:21.00px;background:linear-gradient(#faf9f8,#f3f1ef);border:1px solid #dcd7d2;border-bottom-color:#d3cdc8;border-radius:3px;box-sizing:border-box;"></div><div style="position:absolute;left:82.50px;top:390.40px;width:22.50px;height:21.00px;background:linear-gradient(#faf9f8,#f3f1ef);border:1px solid #dcd7d2;border-bottom-color:#d3cdc8;border-radius:3px;box-sizing:border-box;"></div><div style="position:absolute;left:109.80px;top:390.40px;width:22.40px;height:21.00px;background:linear-gradient(#faf9f8,#f3f1ef);border:1px solid #dcd7d2;border-bottom-color:#d3cdc8;border-radius:3px;box-sizing:border-box;"></div><div style="position:absolute;left:136.70px;top:390.40px;width:22.80px;height:21.00px;background:linear-gradient(#faf9f8,#f3f1ef);border:1px solid #dcd7d2;border-bottom-color:#d3cdc8;border-radius:3px;box-sizing:border-box;"></div><div style="position:absolute;left:164.30px;top:390.40px;width:22.40px;height:21.00px;background:linear-gradient(#faf9f8,#f3f1ef);border:1px solid #dcd7d2;border-bottom-color:#d3cdc8;border-radius:3px;box-sizing:border-box;"></div><svg style="position:absolute;left:6.00px;top:395.00px" width="13" height="12" viewBox="0 0 13 12"><path d="M6.5 4.2 L10.3 8 L6.5 11.2 L2.7 8 Z" fill="none" stroke="#7b7d7a" stroke-width="0.9"/><path d="M4.8 7.8 L6.5 9.4 L8.2 7.8" fill="none" stroke="#7b7d7a" stroke-width="0.7"/><path d="M1.5 1.6 L2.4 1.6 M3.2 0.9 L4.6 0.9 M1.8 2.8 L2.6 3.6 M5.2 2 L6.2 3" stroke="#8a8c89" stroke-width="0.7"/></svg><svg style="position:absolute;left:33.50px;top:395.50px" width="12" height="12" viewBox="0 0 12 12"><rect x="0.8" y="1.2" width="9" height="9.8" fill="#f4f4f2" stroke="#666864" stroke-width="0.9"/><rect x="1.6" y="0.4" width="6.8" height="1.8" fill="#9a9c98"/><rect x="0.8" y="10" width="9" height="1.1" fill="#555753"/><path d="M2.6 9.4 L3.4 7 L8.8 1.6 L10.3 3.1 L4.9 8.5 Z" fill="#f19c35" stroke="#a85c12" stroke-width="0.45"/><circle cx="10" cy="1.7" r="1.3" fill="#ea4d4d"/></svg><svg style="position:absolute;left:60.50px;top:395.00px" width="12" height="12" viewBox="0 0 12 12"><path d="M8.8 0.8 L10.6 2 L8.4 5.2 L7 4.4 Z" fill="#b77f2a"/><path d="M6.6 4 L9 5.6 L7.4 11.2 C5.4 11.4 3 10.6 1.2 9.2 Z" fill="#e8dc3a"/><path d="M6.6 4 L9 5.6 L8.2 6.6 L6 5.2 Z" fill="#c9b52a"/></svg><svg style="position:absolute;left:88.00px;top:398.50px" width="11" height="6" viewBox="0 0 11 6"><path d="M0.8 0.6 L3.2 2.9 L0.8 5.2" fill="none" stroke="#2e3436" stroke-width="1.3"/><path d="M9.8 0.6 L7.4 2.9 L9.8 5.2" fill="none" stroke="#2e3436" stroke-width="1.3"/></svg><svg style="position:absolute;left:114.80px;top:395.80px" width="12" height="12" viewBox="0 0 12 12"><rect x="0.6" y="0.6" width="6.6" height="6.6" fill="#f4f4f2" stroke="#9c9e9a" stroke-width="0.9"/><rect x="4.2" y="4.2" width="6.6" height="6.6" fill="#f4f4f2" stroke="#8a8c88" stroke-width="0.9"/><path d="M2 2.4 L4.5 2.4 M2 3.6 L3.8 3.6" stroke="#b0b2ae" stroke-width="0.6"/></svg><svg style="position:absolute;left:142.20px;top:395.60px" width="12" height="12" viewBox="0 0 12 12"><path d="M1.2 0.6 L7.6 8 M10.8 0.6 L4.4 8" stroke="#9fa19d" stroke-width="1.1"/><circle cx="3" cy="8.9" r="2.3" fill="#d9222a"/><circle cx="9" cy="8.9" r="2.3" fill="#d9222a"/></svg><svg style="position:absolute;left:169.50px;top:395.60px" width="12" height="12" viewBox="0 0 12 12"><rect x="0.5" y="1.4" width="9.6" height="9.4" fill="#d7a552" stroke="#a8772b" stroke-width="0.6"/><rect x="3.8" y="0.6" width="4.4" height="2" fill="#888a85"/><rect x="3.6" y="3.8" width="7.2" height="6.8" fill="#f2f2f0" stroke="#9a9c98" stroke-width="0.6"/><path d="M5 5.6 L8.6 5.6 M5 6.8 L7.6 6.8" stroke="#b0b2ae" stroke-width="0.6"/></svg><div style="position:absolute;left:191.70px;top:390.40px;width:42.20px;height:21.00px;background:linear-gradient(#faf9f8,#f3f1ef);border:1px solid #dcd7d2;border-bottom-color:#d3cdc8;border-radius:3px;box-sizing:border-box;"></div><div style="position:absolute;left:198.60px;top:395.25px;font-size:10px;line-height:11.50px;color:#363b3d;white-space:nowrap;">tool</div><svg style="position:absolute;left:219.60px;top:399.80px" width="6.00" height="3.00" viewBox="0 0 6.00 3.00"><path d="M0 0 L6.00 0 L3.00 3.00 Z" fill="#2e3436"/></svg><div style="position:absolute;left:238.70px;top:395.25px;font-size:10px;line-height:11.50px;color:#363b3d;white-space:nowrap;">zoom</div><div style="position:absolute;left:262.70px;top:390.40px;width:42.50px;height:21.00px;background:linear-gradient(#faf9f8,#f3f1ef);border:1px solid #dcd7d2;border-bottom-color:#d3cdc8;border-radius:3px;box-sizing:border-box;"></div><div style="position:absolute;left:270.00px;top:395.25px;font-size:10px;line-height:11.50px;color:#363b3d;white-space:nowrap;">1:4</div><svg style="position:absolute;left:291.60px;top:399.80px" width="6.00" height="3.00" viewBox="0 0 6.00 3.00"><path d="M0 0 L6.00 0 L3.00 3.00 Z" fill="#2e3436"/></svg><div style="position:absolute;left:310.00px;top:395.25px;font-size:10px;line-height:11.50px;color:#363b3d;white-space:nowrap;">opacity</div><div style="position:absolute;left:342.00px;top:390.40px;width:79.20px;height:21.00px;background:#ffffff;border:1px solid #d8d2cd;border-radius:3px;box-sizing:border-box;"></div><div style="position:absolute;left:376.50px;top:391.40px;width:0.80px;height:19.00px;background:#f0eeec;"></div><div style="position:absolute;left:398.70px;top:391.40px;width:0.80px;height:19.00px;background:#f0eeec;"></div><div style="position:absolute;left:346.50px;top:395.25px;font-size:10px;line-height:11.50px;color:#363b3d;white-space:nowrap;">0.0500</div><svg style="position:absolute;left:383.60px;top:396.90px" width="8" height="8" viewBox="0 0 8 8"><path d="M0.6 4 L7.4 4" stroke="#2e3436" stroke-width="1.5"/></svg><svg style="position:absolute;left:405.95px;top:396.90px" width="8" height="8" viewBox="0 0 8 8"><path d="M0.6 4 L7.4 4 M4 0.6 L4 7.4" stroke="#2e3436" stroke-width="1.6"/></svg><div style="position:absolute;left:426.20px;top:395.25px;font-size:10px;line-height:11.50px;color:#363b3d;white-space:nowrap;">Port</div><div style="position:absolute;left:443.20px;top:390.40px;width:112.80px;height:21.00px;background:linear-gradient(#faf9f8,#f3f1ef);border:1px solid #dcd7d2;border-bottom-color:#d3cdc8;border-radius:3px;box-sizing:border-box;"></div><div style="position:absolute;left:450.60px;top:396.00px;width:10.20px;height:10.00px;background:#3584e4;border:1px solid #2a76d6;border-radius:2.5px;box-sizing:border-box;"></div><svg style="position:absolute;left:450.60px;top:396.00px" width="10.20" height="10.00" viewBox="0 0 10 10"><path d="M2.2 5.2 L4.2 7.2 L7.9 2.9" fill="none" stroke="#fff" stroke-width="1.5"/></svg><div style="position:absolute;left:463.90px;top:395.25px;font-size:10px;line-height:11.50px;color:#363b3d;white-space:nowrap;">input</div><div style="position:absolute;left:489.90px;top:395.25px;font-size:10px;line-height:11.50px;color:#363b3d;white-space:nowrap;">./volume[0]</div><svg style="position:absolute;left:541.60px;top:399.80px" width="6.00" height="3.00" viewBox="0 0 6.00 3.00"><path d="M0 0 L6.00 0 L3.00 3.00 Z" fill="#2e3436"/></svg><div style="position:absolute;left:0.00px;top:416.95px;font-size:10px;line-height:11.50px;color:#363b3d;white-space:nowrap;">selector</div><div style="position:absolute;left:38.50px;top:413.00px;width:21.90px;height:20.00px;background:linear-gradient(#faf9f8,#f3f1ef);border:1px solid #dcd7d2;border-bottom-color:#d3cdc8;border-radius:3px;box-sizing:border-box;"></div><svg style="position:absolute;left:42.4px;top:416.2px" width="13" height="14" viewBox="0 0 13 14"><g fill="none" stroke="#60625f" stroke-width="0.75" stroke-dasharray="0.9 0.6"><circle cx="8.60" cy="3.60" r="1.7"/><circle cx="4.20" cy="8.00" r="1.7"/><circle cx="7.60" cy="7.40" r="1.7"/><circle cx="10.40" cy="7.90" r="1.7"/><circle cx="4.60" cy="11.00" r="1.7"/><circle cx="7.90" cy="11.40" r="1.7"/><circle cx="10.60" cy="10.90" r="1.7"/></g></svg><div style="position:absolute;left:191.20px;top:412.00px;width:0.80px;height:240.50px;background:#d5d0cb;"></div><div style="position:absolute;left:2.60px;top:436.90px;width:10.40px;height:10.40px;background:#fff;border:3.1px solid #3584e4;border-radius:50%;box-sizing:border-box;"></div><div style="position:absolute;left:15.60px;top:436.25px;font-size:10px;line-height:11.50px;color:#363b3d;white-space:nowrap;">AgsMixer: Default 0</div><div style="position:absolute;left:2.40px;top:457.10px;width:10.40px;height:10.40px;background:#fff;border:1px solid #cdc7c2;border-radius:50%;box-sizing:border-box;"></div><div style="position:absolute;left:15.60px;top:456.55px;font-size:10px;line-height:11.50px;color:#363b3d;white-space:nowrap;">AgsDrum: Default 0</div><div style="position:absolute;left:2.40px;top:477.10px;width:10.40px;height:10.40px;background:#fff;border:1px solid #cdc7c2;border-radius:50%;box-sizing:border-box;"></div><div style="position:absolute;left:15.60px;top:476.55px;font-size:10px;line-height:11.50px;color:#363b3d;white-space:nowrap;">AgsAudiorec: Default 0</div><div style="position:absolute;left:231.50px;top:412.60px;width:22.10px;height:21.20px;background:linear-gradient(#faf9f8,#f3f1ef);border:1px solid #dcd7d2;border-bottom-color:#d3cdc8;border-radius:3px;box-sizing:border-box;"></div><svg style="position:absolute;left:241.30px;top:419.80px" width="3.00" height="6.00" viewBox="0 0 3.00 6.00"><path d="M3.00 0 L0 3.00 L3.00 6.00 Z" fill="#2e3436"/></svg><div style="position:absolute;left:254.70px;top:412.60px;width:22.40px;height:21.20px;background:linear-gradient(#faf9f8,#f3f1ef);border:1px solid #dcd7d2;border-bottom-color:#d3cdc8;border-radius:3px;box-sizing:border-box;"></div><svg style="position:absolute;left:264.46px;top:419.80px" width="3.48" height="6.00" viewBox="0 0 3.48 6.00"><path d="M0 0 L3.48 3.00 L0 6.00 Z" fill="#2e3436"/></svg><div style="position:absolute;left:277.60px;top:412.50px;width:961.20px;height:21.00px;overflow:hidden;"><div style="position:absolute;left:0.40px;top:0;width:64.2px;height:20.6px;background:#dcd8d4;border:1px solid #d5d0cb;border-bottom:none;border-radius:3px 3px 0 0;box-sizing:border-box;"></div><div style="position:absolute;left:0.00px;width:65px;text-align:center;top:4.25px;font-size:10px;line-height:11.50px;color:#4a4f52;white-space:nowrap;">line 1</div><div style="position:absolute;left:65.40px;top:0;width:64.2px;height:20.6px;background:#dcd8d4;border:1px solid #d5d0cb;border-bottom:none;border-radius:3px 3px 0 0;box-sizing:border-box;"></div><div style="position:absolute;left:65.00px;width:65px;text-align:center;top:4.25px;font-size:10px;line-height:11.50px;color:#4a4f52;white-space:nowrap;">line 2</div><div style="position:absolute;left:130.40px;top:0;width:64.2px;height:20.6px;background:#dcd8d4;border:1px solid #d5d0cb;border-bottom:none;border-radius:3px 3px 0 0;box-sizing:border-box;"></div><div style="position:absolute;left:130.00px;width:65px;text-align:center;top:4.25px;font-size:10px;line-height:11.50px;color:#4a4f52;white-space:nowrap;">line 3</div><div style="position:absolute;left:195.40px;top:0;width:64.2px;height:20.6px;background:#dcd8d4;border:1px solid #d5d0cb;border-bottom:none;border-radius:3px 3px 0 0;box-sizing:border-box;"></div><div style="position:absolute;left:195.00px;width:65px;text-align:center;top:4.25px;font-size:10px;line-height:11.50px;color:#4a4f52;white-space:nowrap;">line 4</div><div style="position:absolute;left:260.40px;top:0;width:64.2px;height:20.6px;background:#dcd8d4;border:1px solid #d5d0cb;border-bottom:none;border-radius:3px 3px 0 0;box-sizing:border-box;"></div><div style="position:absolute;left:260.00px;width:65px;text-align:center;top:4.25px;font-size:10px;line-height:11.50px;color:#4a4f52;white-space:nowrap;">line 5</div><div style="position:absolute;left:325.40px;top:0;width:64.2px;height:20.6px;background:#dcd8d4;border:1px solid #d5d0cb;border-bottom:none;border-radius:3px 3px 0 0;box-sizing:border-box;"></div><div style="position:absolute;left:325.00px;width:65px;text-align:center;top:4.25px;font-size:10px;line-height:11.50px;color:#4a4f52;white-space:nowrap;">line 6</div><div style="position:absolute;left:390.40px;top:0;width:64.2px;height:20.6px;background:#dcd8d4;border:1px solid #d5d0cb;border-bottom:none;border-radius:3px 3px 0 0;box-sizing:border-box;"></div><div style="position:absolute;left:390.00px;width:65px;text-align:center;top:4.25px;font-size:10px;line-height:11.50px;color:#4a4f52;white-space:nowrap;">line 7</div><div style="position:absolute;left:455.40px;top:0;width:64.2px;height:20.6px;background:#dcd8d4;border:1px solid #d5d0cb;border-bottom:none;border-radius:3px 3px 0 0;box-sizing:border-box;"></div><div style="position:absolute;left:455.00px;width:65px;text-align:center;top:4.25px;font-size:10px;line-height:11.50px;color:#4a4f52;white-space:nowrap;">line 8</div><div style="position:absolute;left:520.40px;top:0;width:64.2px;height:20.6px;background:#dcd8d4;border:1px solid #d5d0cb;border-bottom:none;border-radius:3px 3px 0 0;box-sizing:border-box;"></div><div style="position:absolute;left:520.00px;width:65px;text-align:center;top:4.25px;font-size:10px;line-height:11.50px;color:#4a4f52;white-space:nowrap;">line 9</div><div style="position:absolute;left:585.40px;top:0;width:64.2px;height:20.6px;background:#dcd8d4;border:1px solid #d5d0cb;border-bottom:none;border-radius:3px 3px 0 0;box-sizing:border-box;"></div><div style="position:absolute;left:585.00px;width:65px;text-align:center;top:4.25px;font-size:10px;line-height:11.50px;color:#4a4f52;white-space:nowrap;">line 10</div><div style="position:absolute;left:650.40px;top:0;width:64.2px;height:20.6px;background:#dcd8d4;border:1px solid #d5d0cb;border-bottom:none;border-radius:3px 3px 0 0;box-sizing:border-box;"></div><div style="position:absolute;left:650.00px;width:65px;text-align:center;top:4.25px;font-size:10px;line-height:11.50px;color:#4a4f52;white-space:nowrap;">line 11</div><div style="position:absolute;left:715.40px;top:0;width:64.2px;height:20.6px;background:#dcd8d4;border:1px solid #d5d0cb;border-bottom:none;border-radius:3px 3px 0 0;box-sizing:border-box;"></div><div style="position:absolute;left:715.00px;width:65px;text-align:center;top:4.25px;font-size:10px;line-height:11.50px;color:#4a4f52;white-space:nowrap;">line 12</div><div style="position:absolute;left:780.40px;top:0;width:64.2px;height:20.6px;background:#dcd8d4;border:1px solid #d5d0cb;border-bottom:none;border-radius:3px 3px 0 0;box-sizing:border-box;"></div><div style="position:absolute;left:780.00px;width:65px;text-align:center;top:4.25px;font-size:10px;line-height:11.50px;color:#4a4f52;white-space:nowrap;">line 13</div><div style="position:absolute;left:845.40px;top:0;width:64.2px;height:20.6px;background:#dcd8d4;border:1px solid #d5d0cb;border-bottom:none;border-radius:3px 3px 0 0;box-sizing:border-box;"></div><div style="position:absolute;left:845.00px;width:65px;text-align:center;top:4.25px;font-size:10px;line-height:11.50px;color:#4a4f52;white-space:nowrap;">line 14</div><div style="position:absolute;left:910.40px;top:0;width:64.2px;height:20.6px;background:#dcd8d4;border:1px solid #d5d0cb;border-bottom:none;border-radius:3px 3px 0 0;box-sizing:border-box;"></div><div style="position:absolute;left:910.00px;width:65px;text-align:center;top:4.25px;font-size:10px;line-height:11.50px;color:#4a4f52;white-space:nowrap;">line 15</div></div><div style="position:absolute;left:231.00px;top:433.90px;width:1007.80px;height:15.80px;background:#02021a;overflow:hidden;"><div style="position:absolute;left:-0.50px;top:10.5px;width:1.1px;height:5.3px;background:#a4a8ab;"></div><div style="position:absolute;left:0.30px;top:0.40px;font-size:11px;line-height:12px;letter-spacing:0;color:#fff;">0</div><div style="position:absolute;left:41.10px;top:12px;width:1.1px;height:3.8px;background:#a4a8ab;"></div><div style="position:absolute;left:82.70px;top:12px;width:1.1px;height:3.8px;background:#a4a8ab;"></div><div style="position:absolute;left:124.30px;top:12px;width:1.1px;height:3.8px;background:#a4a8ab;"></div><div style="position:absolute;left:165.90px;top:10.5px;width:1.1px;height:5.3px;background:#a4a8ab;"></div><div style="position:absolute;left:166.70px;top:0.40px;font-size:11px;line-height:12px;letter-spacing:0;color:#fff;">1</div><div style="position:absolute;left:207.50px;top:12px;width:1.1px;height:3.8px;background:#a4a8ab;"></div><div style="position:absolute;left:249.10px;top:12px;width:1.1px;height:3.8px;background:#a4a8ab;"></div><div style="position:absolute;left:290.70px;top:12px;width:1.1px;height:3.8px;background:#a4a8ab;"></div><div style="position:absolute;left:332.30px;top:10.5px;width:1.1px;height:5.3px;background:#a4a8ab;"></div><div style="position:absolute;left:333.10px;top:0.40px;font-size:11px;line-height:12px;letter-spacing:0;color:#fff;">2</div><div style="position:absolute;left:373.90px;top:12px;width:1.1px;height:3.8px;background:#a4a8ab;"></div><div style="position:absolute;left:415.50px;top:12px;width:1.1px;height:3.8px;background:#a4a8ab;"></div><div style="position:absolute;left:457.10px;top:12px;width:1.1px;height:3.8px;background:#a4a8ab;"></div><div style="position:absolute;left:498.70px;top:10.5px;width:1.1px;height:5.3px;background:#a4a8ab;"></div><div style="position:absolute;left:499.50px;top:0.40px;font-size:11px;line-height:12px;letter-spacing:0;color:#fff;">3</div><div style="position:absolute;left:540.30px;top:12px;width:1.1px;height:3.8px;background:#a4a8ab;"></div><div style="position:absolute;left:581.90px;top:12px;width:1.1px;height:3.8px;background:#a4a8ab;"></div><div style="position:absolute;left:623.50px;top:12px;width:1.1px;height:3.8px;background:#a4a8ab;"></div><div style="position:absolute;left:665.10px;top:10.5px;width:1.1px;height:5.3px;background:#a4a8ab;"></div><div style="position:absolute;left:665.90px;top:0.40px;font-size:11px;line-height:12px;letter-spacing:0;color:#fff;">4</div><div style="position:absolute;left:706.70px;top:12px;width:1.1px;height:3.8px;background:#a4a8ab;"></div><div style="position:absolute;left:748.30px;top:12px;width:1.1px;height:3.8px;background:#a4a8ab;"></div><div style="position:absolute;left:789.90px;top:12px;width:1.1px;height:3.8px;background:#a4a8ab;"></div><div style="position:absolute;left:831.50px;top:10.5px;width:1.1px;height:5.3px;background:#a4a8ab;"></div><div style="position:absolute;left:832.30px;top:0.40px;font-size:11px;line-height:12px;letter-spacing:0;color:#fff;">5</div><div style="position:absolute;left:873.10px;top:12px;width:1.1px;height:3.8px;background:#a4a8ab;"></div><div style="position:absolute;left:914.70px;top:12px;width:1.1px;height:3.8px;background:#a4a8ab;"></div><div style="position:absolute;left:956.30px;top:12px;width:1.1px;height:3.8px;background:#a4a8ab;"></div><div style="position:absolute;left:997.90px;top:10.5px;width:1.1px;height:5.3px;background:#a4a8ab;"></div><div style="position:absolute;left:998.70px;top:0.40px;font-size:11px;line-height:12px;letter-spacing:0;color:#fff;">6</div></div><div style="position:absolute;left:191.80px;top:449.80px;width:39.00px;height:82.80px;background:#000;"></div><div style="position:absolute;left:230.20px;top:449.80px;width:0.70px;height:82.80px;background:#6b5a1e;"></div><div style="position:absolute;left:224.30px;top:449.90px;width:6.50px;height:0.80px;background:#6b5a1e;"></div><div style="position:absolute;left:224.30px;top:469.90px;width:6.50px;height:0.80px;background:#6b5a1e;"></div><div style="position:absolute;left:224.30px;top:490.00px;width:6.50px;height:0.80px;background:#6b5a1e;"></div><div style="position:absolute;left:224.30px;top:511.20px;width:6.50px;height:0.80px;background:#6b5a1e;"></div><div style="position:absolute;left:224.30px;top:531.40px;width:6.50px;height:0.80px;background:#6b5a1e;"></div><div style="position:absolute;left:191.8px;top:532.6px;width:82.8px;height:39px;transform-origin:0 0;transform:rotate(-90deg);font-size:11px;line-height:11.8px;letter-spacing:0;color:#fff;white-space:nowrap;box-sizing:border-box;padding-top:5.9px;padding-left:0.3px;">./volume[0]<br>[0.00 - 2.00]</div><div style="position:absolute;left:231.00px;top:449.80px;width:1007.80px;height:82.80px;overflow:hidden;"><svg width="1007.80" height="82.80" style="position:absolute;left:0;top:0"><rect x="0" y="0" width="1007.80" height="82.80" fill="#cdd4da"/><path d="M0 82.80 L0.00 60.90 L10.40 60.90 L10.40 59.66 L20.80 59.66 L20.80 58.42 L31.20 58.42 L31.20 57.19 L41.60 57.19 L41.60 55.95 L52.00 55.95 L52.00 54.71 L62.40 54.71 L62.40 53.47 L72.80 53.47 L72.80 52.24 L83.20 52.24 L83.20 51.00 L93.60 51.00 L93.60 49.76 L104.00 49.76 L104.00 48.52 L114.40 48.52 L114.40 47.29 L124.80 47.29 L124.80 46.05 L135.20 46.05 L135.20 44.81 L145.60 44.81 L145.60 43.57 L156.00 43.57 L156.00 42.34 L166.40 42.34 L166.40 41.10 L176.80 41.10 L176.80 41.77 L187.20 41.77 L187.20 42.44 L197.60 42.44 L197.60 43.11 L208.00 43.11 L208.00 43.77 L218.40 43.77 L218.40 44.44 L228.80 44.44 L228.80 45.11 L239.20 45.11 L239.20 45.78 L249.60 45.78 L249.60 46.45 L260.00 46.45 L260.00 47.12 L270.40 47.12 L270.40 47.79 L280.80 47.79 L280.80 48.46 L291.20 48.46 L291.20 49.12 L301.60 49.12 L301.60 49.79 L312.00 49.79 L312.00 50.46 L322.40 50.46 L322.40 51.13 L332.80 51.13 L332.80 51.80 L343.20 51.80 L343.20 51.14 L353.60 51.14 L353.60 50.48 L364.00 50.48 L364.00 49.81 L374.40 49.81 L374.40 49.15 L384.80 49.15 L384.80 48.49 L395.20 48.49 L395.20 47.82 L405.60 47.82 L405.60 47.16 L416.00 47.16 L416.00 46.50 L426.40 46.50 L426.40 45.84 L436.80 45.84 L436.80 45.18 L447.20 45.18 L447.20 44.51 L457.60 44.51 L457.60 43.85 L468.00 43.85 L468.00 43.19 L478.40 43.19 L478.40 42.52 L488.80 42.52 L488.80 41.86 L499.20 41.86 L499.20 41.20 L509.60 41.20 L509.60 42.59 L520.00 42.59 L520.00 43.99 L530.40 43.99 L530.40 45.38 L540.80 45.38 L540.80 46.78 L551.20 46.78 L551.20 48.17 L561.60 48.17 L561.60 49.57 L572.00 49.57 L572.00 50.96 L582.40 50.96 L582.40 52.36 L592.80 52.36 L592.80 53.75 L603.20 53.75 L603.20 55.15 L613.60 55.15 L613.60 56.54 L624.00 56.54 L624.00 57.94 L634.40 57.94 L634.40 59.33 L644.80 59.33 L644.80 60.73 L655.20 60.73 L655.20 62.12 L665.60 62.12 L665.60 62.40 L676.00 62.40 L676.00 62.40 L686.40 62.40 L686.40 62.40 L696.80 62.40 L696.80 62.40 L707.20 62.40 L707.20 62.40 L717.60 62.40 L717.60 62.40 L728.00 62.40 L728.00 62.40 L738.40 62.40 L738.40 62.40 L748.80 62.40 L748.80 62.40 L759.20 62.40 L759.20 62.40 L769.60 62.40 L769.60 62.40 L780.00 62.40 L780.00 62.40 L790.40 62.40 L790.40 62.40 L800.80 62.40 L800.80 62.40 L811.20 62.40 L811.20 62.40 L821.60 62.40 L821.60 62.40 L832.00 62.40 L832.00 62.40 L842.40 62.40 L842.40 62.40 L852.80 62.40 L852.80 62.40 L863.20 62.40 L863.20 62.40 L873.60 62.40 L873.60 62.40 L884.00 62.40 L884.00 62.40 L894.40 62.40 L894.40 62.40 L904.80 62.40 L904.80 62.40 L915.20 62.40 L915.20 62.40 L925.60 62.40 L925.60 62.40 L936.00 62.40 L936.00 62.40 L946.40 62.40 L946.40 62.40 L956.80 62.40 L956.80 62.40 L967.20 62.40 L967.20 62.40 L977.60 62.40 L977.60 62.40 L988.00 62.40 L988.00 62.40 L998.40 62.40 L998.40 62.40 L1008.80 62.40 L1008.80 62.40 L1019.20 62.40 L1007.80 82.80 Z" fill="#5f6466"/><rect x="0" y="20.00" width="1007.80" height="1" fill="#000" opacity="0.33"/><rect x="0" y="40.70" width="1007.80" height="1" fill="#000" opacity="0.33"/><rect x="0" y="61.80" width="1007.80" height="1" fill="#000" opacity="0.33"/><rect x="-0.55" y="0" width="1.1" height="82.80" fill="#000" opacity="0.6"/><rect x="41.05" y="0" width="1.1" height="82.80" fill="#000" opacity="0.36"/><rect x="82.65" y="0" width="1.1" height="82.80" fill="#000" opacity="0.36"/><rect x="124.25" y="0" width="1.1" height="82.80" fill="#000" opacity="0.36"/><rect x="165.85" y="0" width="1.1" height="82.80" fill="#000" opacity="0.6"/><rect x="207.45" y="0" width="1.1" height="82.80" fill="#000" opacity="0.36"/><rect x="249.05" y="0" width="1.1" height="82.80" fill="#000" opacity="0.36"/><rect x="290.65" y="0" width="1.1" height="82.80" fill="#000" opacity="0.36"/><rect x="332.25" y="0" width="1.1" height="82.80" fill="#000" opacity="0.6"/><rect x="373.85" y="0" width="1.1" height="82.80" fill="#000" opacity="0.36"/><rect x="415.45" y="0" width="1.1" height="82.80" fill="#000" opacity="0.36"/><rect x="457.05" y="0" width="1.1" height="82.80" fill="#000" opacity="0.36"/><rect x="498.65" y="0" width="1.1" height="82.80" fill="#000" opacity="0.6"/><rect x="540.25" y="0" width="1.1" height="82.80" fill="#000" opacity="0.36"/><rect x="581.85" y="0" width="1.1" height="82.80" fill="#000" opacity="0.36"/><rect x="623.45" y="0" width="1.1" height="82.80" fill="#000" opacity="0.36"/><rect x="665.05" y="0" width="1.1" height="82.80" fill="#000" opacity="0.6"/><rect x="706.65" y="0" width="1.1" height="82.80" fill="#000" opacity="0.36"/><rect x="748.25" y="0" width="1.1" height="82.80" fill="#000" opacity="0.36"/><rect x="789.85" y="0" width="1.1" height="82.80" fill="#000" opacity="0.36"/><rect x="831.45" y="0" width="1.1" height="82.80" fill="#000" opacity="0.6"/><rect x="873.05" y="0" width="1.1" height="82.80" fill="#000" opacity="0.36"/><rect x="914.65" y="0" width="1.1" height="82.80" fill="#000" opacity="0.36"/><rect x="956.25" y="0" width="1.1" height="82.80" fill="#000" opacity="0.36"/><rect x="997.85" y="0" width="1.1" height="82.80" fill="#000" opacity="0.6"/><circle cx="10.40" cy="59.66" r="1.1" fill="#2a2d2f"/><circle cx="20.80" cy="58.42" r="1.1" fill="#2a2d2f"/><circle cx="31.20" cy="57.19" r="1.1" fill="#2a2d2f"/><circle cx="41.60" cy="55.95" r="1.1" fill="#2a2d2f"/><circle cx="52.00" cy="54.71" r="1.1" fill="#2a2d2f"/><circle cx="62.40" cy="53.47" r="1.1" fill="#2a2d2f"/><circle cx="72.80" cy="52.24" r="1.1" fill="#2a2d2f"/><circle cx="83.20" cy="51.00" r="1.1" fill="#2a2d2f"/><circle cx="93.60" cy="49.76" r="1.1" fill="#2a2d2f"/><circle cx="104.00" cy="48.52" r="1.1" fill="#2a2d2f"/><circle cx="114.40" cy="47.29" r="1.1" fill="#2a2d2f"/><circle cx="124.80" cy="46.05" r="1.1" fill="#2a2d2f"/><circle cx="135.20" cy="44.81" r="1.1" fill="#2a2d2f"/><circle cx="145.60" cy="43.57" r="1.1" fill="#2a2d2f"/><circle cx="156.00" cy="42.34" r="1.1" fill="#2a2d2f"/><circle cx="166.40" cy="41.10" r="1.1" fill="#2a2d2f"/><circle cx="176.80" cy="41.77" r="1.1" fill="#2a2d2f"/><circle cx="187.20" cy="42.44" r="1.1" fill="#2a2d2f"/><circle cx="197.60" cy="43.11" r="1.1" fill="#2a2d2f"/><circle cx="208.00" cy="43.77" r="1.1" fill="#2a2d2f"/><circle cx="218.40" cy="44.44" r="1.1" fill="#2a2d2f"/><circle cx="228.80" cy="45.11" r="1.1" fill="#2a2d2f"/><circle cx="239.20" cy="45.78" r="1.1" fill="#2a2d2f"/><circle cx="249.60" cy="46.45" r="1.1" fill="#2a2d2f"/><circle cx="260.00" cy="47.12" r="1.1" fill="#2a2d2f"/><circle cx="270.40" cy="47.79" r="1.1" fill="#2a2d2f"/><circle cx="280.80" cy="48.46" r="1.1" fill="#2a2d2f"/><circle cx="291.20" cy="49.12" r="1.1" fill="#2a2d2f"/><circle cx="301.60" cy="49.79" r="1.1" fill="#2a2d2f"/><circle cx="312.00" cy="50.46" r="1.1" fill="#2a2d2f"/><circle cx="322.40" cy="51.13" r="1.1" fill="#2a2d2f"/><circle cx="332.80" cy="51.80" r="1.1" fill="#2a2d2f"/><circle cx="343.20" cy="51.14" r="1.1" fill="#2a2d2f"/><circle cx="353.60" cy="50.48" r="1.1" fill="#2a2d2f"/><circle cx="364.00" cy="49.81" r="1.1" fill="#2a2d2f"/><circle cx="374.40" cy="49.15" r="1.1" fill="#2a2d2f"/><circle cx="384.80" cy="48.49" r="1.1" fill="#2a2d2f"/><circle cx="395.20" cy="47.82" r="1.1" fill="#2a2d2f"/><circle cx="405.60" cy="47.16" r="1.1" fill="#2a2d2f"/><circle cx="416.00" cy="46.50" r="1.1" fill="#2a2d2f"/><circle cx="426.40" cy="45.84" r="1.1" fill="#2a2d2f"/><circle cx="436.80" cy="45.18" r="1.1" fill="#2a2d2f"/><circle cx="447.20" cy="44.51" r="1.1" fill="#2a2d2f"/><circle cx="457.60" cy="43.85" r="1.1" fill="#2a2d2f"/><circle cx="468.00" cy="43.19" r="1.1" fill="#2a2d2f"/><circle cx="478.40" cy="42.52" r="1.1" fill="#2a2d2f"/><circle cx="488.80" cy="41.86" r="1.1" fill="#2a2d2f"/><circle cx="499.20" cy="41.20" r="1.1" fill="#2a2d2f"/><circle cx="509.60" cy="42.59" r="1.1" fill="#2a2d2f"/><circle cx="520.00" cy="43.99" r="1.1" fill="#2a2d2f"/><circle cx="530.40" cy="45.38" r="1.1" fill="#2a2d2f"/><circle cx="540.80" cy="46.78" r="1.1" fill="#2a2d2f"/><circle cx="551.20" cy="48.17" r="1.1" fill="#2a2d2f"/><circle cx="561.60" cy="49.57" r="1.1" fill="#2a2d2f"/><circle cx="572.00" cy="50.96" r="1.1" fill="#2a2d2f"/><circle cx="582.40" cy="52.36" r="1.1" fill="#2a2d2f"/><circle cx="592.80" cy="53.75" r="1.1" fill="#2a2d2f"/><circle cx="603.20" cy="55.15" r="1.1" fill="#2a2d2f"/><circle cx="613.60" cy="56.54" r="1.1" fill="#2a2d2f"/><circle cx="624.00" cy="57.94" r="1.1" fill="#2a2d2f"/><circle cx="634.40" cy="59.33" r="1.1" fill="#2a2d2f"/><circle cx="644.80" cy="60.73" r="1.1" fill="#2a2d2f"/><circle cx="655.20" cy="62.12" r="1.1" fill="#2a2d2f"/></svg></div><div style="position:absolute;left:1239.20px;top:450.30px;width:8.80px;height:202.20px;background:#cfcfcf;"></div><div style="position:absolute;left:1241.20px;top:452.00px;width:4.80px;height:190.00px;background:#7e8283;border-radius:3px;"></div><div style="position:absolute;left:230.70px;top:644.00px;width:1008.50px;height:8.50px;background:#cfcfcf;"></div><div style="position:absolute;left:232.70px;top:646.00px;width:26.30px;height:5.30px;background:#7e8283;border-radius:3px;"></div><div style="position:absolute;left:1245.00px;top:33.00px;width:2.70px;height:174.50px;background:#8d9091;border-radius:2px;opacity:0.85;"></div><svg style="position:absolute;left:835px;top:37.5px" width="12" height="15" viewBox="0 0 12 15"><path d="M1.6 1.4 L1.6 12.2 L4.2 9.6 L5.6 12.8 Q6.2 13.6 7 13.2 Q7.6 12.8 7.3 12 L6 9 L9.4 8.9 Z" fill="#fafafa" stroke="#333" stroke-width="0.9" stroke-linejoin="round"/></svg><div style="position:absolute;left:0.00px;top:657.70px;width:23.00px;height:21.10px;background:linear-gradient(#faf9f8,#f3f1ef);border:1px solid #dcd7d2;border-bottom-color:#d3cdc8;border-radius:3px;box-sizing:border-box;"></div><svg style="position:absolute;left:8.50px;top:667.00px" width="6.00" height="3.00" viewBox="0 0 6.00 3.00"><path d="M0 0 L6.00 0 L3.00 3.00 Z" fill="#2e3436"/></svg><div style="position:absolute;left:27.60px;top:662.15px;font-size:10px;line-height:11.50px;color:#363b3d;white-space:nowrap;">bpm</div><div style="position:absolute;left:50.60px;top:657.70px;width:74.40px;height:21.10px;background:#ffffff;border:1px solid #d8d2cd;border-radius:3px;box-sizing:border-box;"></div><div style="position:absolute;left:79.50px;top:658.70px;width:0.80px;height:19.10px;background:#f0eeec;"></div><div style="position:absolute;left:102.60px;top:658.70px;width:0.80px;height:19.10px;background:#f0eeec;"></div><div style="position:absolute;left:55.10px;top:662.60px;font-size:10px;line-height:11.50px;color:#363b3d;white-space:nowrap;">120</div><svg style="position:absolute;left:87.05px;top:664.25px" width="8" height="8" viewBox="0 0 8 8"><path d="M0.6 4 L7.4 4" stroke="#2e3436" stroke-width="1.5"/></svg><svg style="position:absolute;left:109.80px;top:664.25px" width="8" height="8" viewBox="0 0 8 8"><path d="M0.6 4 L7.4 4 M4 0.6 L4 7.4" stroke="#2e3436" stroke-width="1.6"/></svg><div style="position:absolute;left:129.30px;top:657.20px;width:23.20px;height:22.00px;background:linear-gradient(#faf9f8,#f3f1ef);border:1px solid #dcd7d2;border-bottom-color:#d3cdc8;border-radius:3px;box-sizing:border-box;"></div><div style="position:absolute;left:156.50px;top:657.20px;width:23.30px;height:22.00px;background:linear-gradient(#faf9f8,#f3f1ef);border:1px solid #dcd7d2;border-bottom-color:#d3cdc8;border-radius:3px;box-sizing:border-box;"></div><div style="position:absolute;left:184.10px;top:657.20px;width:23.20px;height:22.00px;background:linear-gradient(#faf9f8,#f3f1ef);border:1px solid #dcd7d2;border-bottom-color:#d3cdc8;border-radius:3px;box-sizing:border-box;"></div><div style="position:absolute;left:211.30px;top:657.20px;width:23.30px;height:22.00px;background:linear-gradient(#faf9f8,#f3f1ef);border:1px solid #dcd7d2;border-bottom-color:#d3cdc8;border-radius:3px;box-sizing:border-box;"></div><div style="position:absolute;left:238.30px;top:657.20px;width:23.20px;height:22.00px;background:linear-gradient(#faf9f8,#f3f1ef);border:1px solid #dcd7d2;border-bottom-color:#d3cdc8;border-radius:3px;box-sizing:border-box;"></div><div style="position:absolute;left:265.80px;top:657.20px;width:23.20px;height:22.00px;background:linear-gradient(#faf9f8,#f3f1ef);border:1px solid #dcd7d2;border-bottom-color:#d3cdc8;border-radius:3px;box-sizing:border-box;"></div><svg style="position:absolute;left:134.90px;top:663.60px" width="12" height="10" viewBox="0 0 12 10"><path d="M1.3 2 L1.3 8 M6.2 2 L2.6 5 L6.2 8 Z M10.6 2 L7 5 L10.6 8 Z" fill="#e4e4e2" stroke="#a9a9a7" stroke-width="0.85" stroke-linejoin="round"/></svg><svg style="position:absolute;left:162.10px;top:663.60px" width="12" height="10" viewBox="0 0 12 10"><path d="M6 2 L2.2 5 L6 8 Z M10 2 L6.2 5 L10 8 Z" fill="#e4e4e2" stroke="#a9a9a7" stroke-width="0.85" stroke-linejoin="round"/></svg><svg style="position:absolute;left:189.70px;top:663.60px" width="12" height="10" viewBox="0 0 12 10"><path d="M3.6 1.6 L8.8 5 L3.6 8.4 Z" fill="#e4e4e2" stroke="#a9a9a7" stroke-width="0.85" stroke-linejoin="round"/></svg><svg style="position:absolute;left:216.90px;top:663.60px" width="12" height="10" viewBox="0 0 12 10"><path d="M3.8 2.6 L8.2 2.6 L8.2 7.4 L3.8 7.4 Z" fill="#e4e4e2" stroke="#a9a9a7" stroke-width="0.85" stroke-linejoin="round"/></svg><svg style="position:absolute;left:243.90px;top:663.60px" width="12" height="10" viewBox="0 0 12 10"><path d="M2 2 L5.8 5 L2 8 Z M6 2 L9.8 5 L6 8 Z" fill="#e4e4e2" stroke="#a9a9a7" stroke-width="0.85" stroke-linejoin="round"/></svg><svg style="position:absolute;left:271.40px;top:663.60px" width="12" height="10" viewBox="0 0 12 10"><path d="M1.4 2 L5 5 L1.4 8 Z M5.8 2 L9.4 5 L5.8 8 Z M10.7 2 L10.7 8" fill="#e4e4e2" stroke="#a9a9a7" stroke-width="0.85" stroke-linejoin="round"/></svg><div style="position:absolute;left:295.70px;top:663.00px;width:10.50px;height:10.40px;background:#3584e4;border:1px solid #2a76d6;border-radius:2.5px;box-sizing:border-box;"></div><svg style="position:absolute;left:295.70px;top:663.00px" width="10.50" height="10.40" viewBox="0 0 10 10"><path d="M2.2 5.2 L4.2 7.2 L7.9 2.9" fill="none" stroke="#fff" stroke-width="1.5"/></svg><div style="position:absolute;left:308.70px;top:662.15px;font-size:10px;line-height:11.50px;color:#363b3d;white-space:nowrap;">loop</div><div style="position:absolute;left:333.70px;top:662.15px;font-size:10px;line-height:11.50px;color:#363b3d;white-space:nowrap;">position</div><div style="position:absolute;left:371.20px;top:662.15px;font-size:10px;line-height:11.50px;color:#363b3d;white-space:nowrap;">0000:00.000</div><div style="position:absolute;left:427.50px;top:657.70px;width:80.00px;height:21.10px;background:#ffffff;border:1px solid #d8d2cd;border-radius:3px;box-sizing:border-box;"></div><div style="position:absolute;left:461.30px;top:658.70px;width:0.80px;height:19.10px;background:#f0eeec;"></div><div style="position:absolute;left:484.70px;top:658.70px;width:0.80px;height:19.10px;background:#f0eeec;"></div><div style="position:absolute;left:432.00px;top:662.60px;font-size:10px;line-height:11.50px;color:#363b3d;white-space:nowrap;">0</div><svg style="position:absolute;left:469.00px;top:664.25px" width="8" height="8" viewBox="0 0 8 8"><path d="M0.6 4 L7.4 4" stroke="#c9cbcb" stroke-width="1.5"/></svg><svg style="position:absolute;left:492.10px;top:664.25px" width="8" height="8" viewBox="0 0 8 8"><path d="M0.6 4 L7.4 4 M4 0.6 L4 7.4" stroke="#2e3436" stroke-width="1.6"/></svg><div style="position:absolute;left:511.60px;top:662.15px;font-size:10px;line-height:11.50px;color:#363b3d;white-space:nowrap;">duration</div><div style="position:absolute;left:550.80px;top:662.15px;font-size:10px;line-height:11.50px;color:#363b3d;white-space:nowrap;">0000:00.000</div><div style="position:absolute;left:0.00px;top:684.75px;font-size:10px;line-height:11.50px;color:#363b3d;white-space:nowrap;">loop L</div><div style="position:absolute;left:29.70px;top:679.70px;width:79.50px;height:20.90px;background:#ffffff;border:1px solid #d8d2cd;border-radius:3px;box-sizing:border-box;"></div><div style="position:absolute;left:64.70px;top:680.70px;width:0.80px;height:18.90px;background:#f0eeec;"></div><div style="position:absolute;left:86.50px;top:680.70px;width:0.80px;height:18.90px;background:#f0eeec;"></div><div style="position:absolute;left:34.20px;top:684.50px;font-size:10px;line-height:11.50px;color:#363b3d;white-space:nowrap;">0</div><svg style="position:absolute;left:71.60px;top:686.15px" width="8" height="8" viewBox="0 0 8 8"><path d="M0.6 4 L7.4 4" stroke="#c9cbcb" stroke-width="1.5"/></svg><svg style="position:absolute;left:93.85px;top:686.15px" width="8" height="8" viewBox="0 0 8 8"><path d="M0.6 4 L7.4 4 M4 0.6 L4 7.4" stroke="#2e3436" stroke-width="1.6"/></svg><div style="position:absolute;left:113.80px;top:684.75px;font-size:10px;line-height:11.50px;color:#363b3d;white-space:nowrap;">loop R</div><div style="position:absolute;left:144.40px;top:680.10px;width:80.10px;height:20.90px;background:#ffffff;border:1px solid #d8d2cd;border-radius:3px;box-sizing:border-box;"></div><div style="position:absolute;left:179.60px;top:681.10px;width:0.80px;height:18.90px;background:#f0eeec;"></div><div style="position:absolute;left:201.70px;top:681.10px;width:0.80px;height:18.90px;background:#f0eeec;"></div><div style="position:absolute;left:148.90px;top:684.90px;font-size:10px;line-height:11.50px;color:#363b3d;white-space:nowrap;">4</div><svg style="position:absolute;left:186.65px;top:686.55px" width="8" height="8" viewBox="0 0 8 8"><path d="M0.6 4 L7.4 4" stroke="#2e3436" stroke-width="1.5"/></svg><svg style="position:absolute;left:209.10px;top:686.55px" width="8" height="8" viewBox="0 0 8 8"><path d="M0.6 4 L7.4 4 M4 0.6 L4 7.4" stroke="#2e3436" stroke-width="1.6"/></svg><div style="position:absolute;left:231.00px;top:685.00px;width:10.80px;height:10.70px;background:#fff;border:1px solid #cdc7c2;border-radius:2.5px;box-sizing:border-box;"></div><div style="position:absolute;left:244.70px;top:684.75px;font-size:10px;line-height:11.50px;color:#363b3d;white-space:nowrap;">auto-scroll</div><div style="position:absolute;left:298.20px;top:685.00px;width:10.60px;height:10.70px;background:#3584e4;border:1px solid #2a76d6;border-radius:2.5px;box-sizing:border-box;"></div><svg style="position:absolute;left:298.20px;top:685.00px" width="10.60" height="10.70" viewBox="0 0 10 10"><path d="M2.2 5.2 L4.2 7.2 L7.9 2.9" fill="none" stroke="#fff" stroke-width="1.5"/></svg><div style="position:absolute;left:311.60px;top:684.75px;font-size:10px;line-height:11.50px;color:#363b3d;white-space:nowrap;">exclude sequencers</div><div style="position:absolute;left:0.00px;top:701.00px;width:1248.00px;height:1.00px;background:#cfcac5;"></div></div>
</body></html>
